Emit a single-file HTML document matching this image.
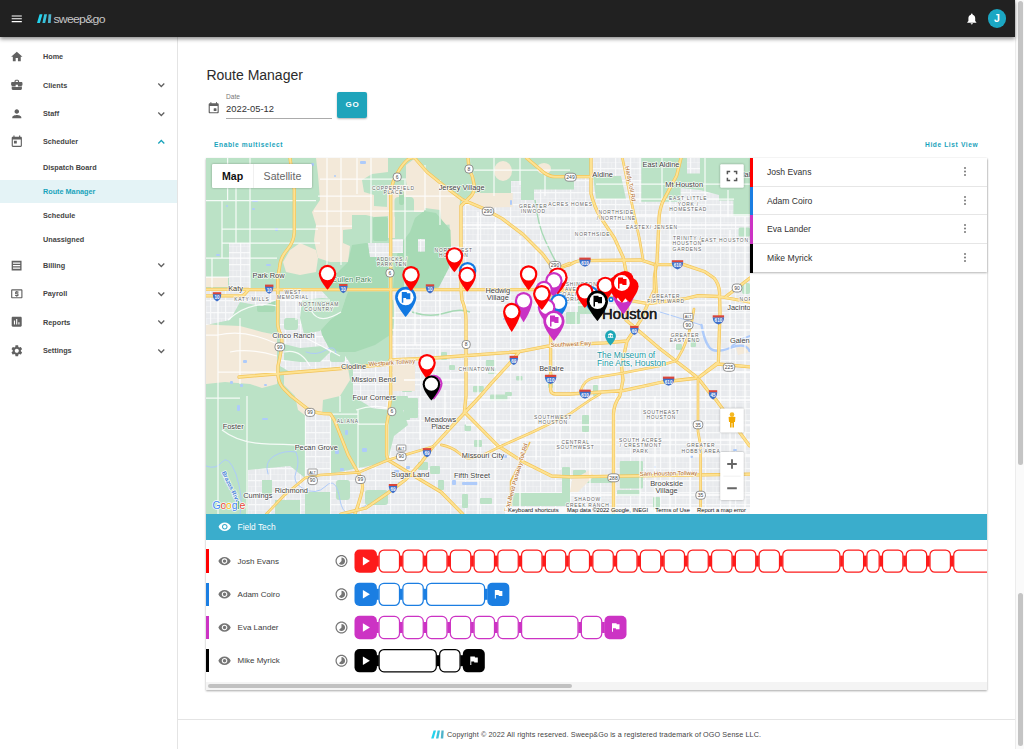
<!DOCTYPE html>
<html lang="en">
<head>
<meta charset="utf-8">
<title>Route Manager</title>
<style>
*{box-sizing:border-box;margin:0;padding:0}
html,body{width:1024px;height:749px;overflow:hidden;background:#fff;font-family:"Liberation Sans",sans-serif;color:#333}
body{position:relative}
.abs{position:absolute}
#hdr{position:absolute;left:0;top:0;width:1015px;height:37px;background:#212121;box-shadow:0 1.5px 4px rgba(0,0,0,.45);z-index:5}
#side{position:absolute;left:0;top:37px;width:178px;height:712px;background:#fff;border-right:1px solid #e4e4e4}
.mi{position:absolute;left:43px;font-size:7.25px;font-weight:700;color:#444;line-height:10px;white-space:nowrap}
.mi.act{color:#19a3bb}
#actbg{position:absolute;left:0;top:143px;width:177px;height:23px;background:#e4f3f6}
.ic{position:absolute}
#vscroll{position:absolute;left:1015px;top:0;width:9px;height:749px;background:#fafafa;border-left:1px solid #ececec}
.vthumb{position:absolute;left:1017.5px;width:5px;background:#c4c4c4;border-radius:3px}
#title{position:absolute;left:206.4px;top:66px;font-size:14px;color:#2b2b2b;line-height:18px;white-space:nowrap}
#datelbl{position:absolute;left:226px;top:92.7px;font-size:6.6px;color:#777;line-height:8px}
#dateval{position:absolute;left:226px;top:102.7px;font-size:9.4px;color:#333;line-height:12px}
#dateline{position:absolute;left:226px;top:118px;width:106px;height:1px;background:#ababab}
#go{position:absolute;left:337px;top:92px;width:30px;height:26px;background:#1ea4bb;border-radius:2px;color:#fff;font-size:8px;font-weight:700;letter-spacing:.9px;text-align:center;line-height:26.6px;padding-left:1px;box-shadow:0 1px 2px rgba(0,0,0,.3)}
.lnk{position:absolute;font-size:6.6px;font-weight:700;color:#19a3bb;letter-spacing:.62px;line-height:8px;white-space:nowrap}
#card{position:absolute;left:206px;top:158px;width:781px;height:532px;background:#fff;box-shadow:0 1px 2px rgba(0,0,0,.35)}
#map{position:absolute;left:0;top:0;width:544px;height:356px;overflow:hidden;background:#e9eaed}
#list{position:absolute;left:544px;top:0;width:237px;height:114px;background:#fff;box-shadow:0 1px 2px rgba(0,0,0,.3)}
.lrow{position:absolute;left:0;width:237px;height:28.5px;border-bottom:1px solid #e6e6e6}
.lrow b{position:absolute;left:0;top:0;width:3px;height:29px}
.lrow span{position:absolute;left:17px;top:9.4px;font-size:8.6px;color:#333;line-height:10px;white-space:nowrap}
.lrow i{position:absolute;left:214px;top:9px;width:2px;height:2px;border-radius:1px;background:#777;box-shadow:0 3.5px 0 #777,0 7px 0 #777}
#ftbar{position:absolute;left:0;top:356px;width:781px;height:26px;background:#3aadcc}
#ftbar span{position:absolute;left:31.6px;top:7.9px;font-size:8.4px;color:#fff;line-height:10px}
.trow{position:absolute;left:0;width:781px;height:33px}
.trow b{position:absolute;left:0;top:4.9px;width:2.5px;height:23.3px}
.trow span{position:absolute;left:31.6px;top:12.2px;font-size:8px;color:#3c3c3c;line-height:10px;white-space:nowrap}
#hs{position:absolute;left:0;top:524px;width:781px;height:8px;background:#f4f4f4}
#hst{position:absolute;left:2px;top:2px;width:364px;height:4px;background:#c1c1c1;border-radius:2px}
#foot{position:absolute;left:178px;top:719px;width:837px;height:30px;border-top:1px solid #e4e4e4;background:#fff}
#foot span{position:absolute;left:269px;top:10.4px;font-size:7.2px;color:#444;line-height:9px;white-space:nowrap;letter-spacing:.12px}
</style>
</head>
<body>
<div id="hdr">
<svg class="ic" style="left:9.9px;top:11.8px" width="13.5" height="13.5" viewBox="0 0 24 24" ><path d="M3 18h18v-2H3v2zm0-5h18v-2H3v2zm0-7v2h18V6H3z" fill="#fff"/></svg>
<svg class="ic" style="left:36px;top:12px" width="72" height="14" viewBox="36 12 72 14"><path d="M39.6 14.3H42.5L39.9 22.9H37Z" fill="#22d3ee"/><path d="M44.2 14.3H47L45.2 22.9H42.4Z" fill="#38c3dc"/><path d="M48.6 14.3H51.3L50.7 22.9H47.9Z" fill="#4fb3ca"/><text x="53.4" y="22.5" font-family="Liberation Sans, sans-serif" font-size="11.4" fill="#c6c6c6" letter-spacing="-.7" textLength="51.4" lengthAdjust="spacingAndGlyphs">sweep&amp;go</text></svg>
<svg class="ic" style="left:964.8px;top:12.2px" width="13.6" height="13.6" viewBox="0 0 24 24" ><path d="M12 22c1.1 0 2-.9 2-2h-4c0 1.1.89 2 2 2zm6-6v-5c0-3.07-1.64-5.64-4.5-6.32V4c0-.83-.67-1.5-1.5-1.5s-1.5.67-1.5 1.5v.68C7.63 5.36 6 7.92 6 11v5l-2 2v1h16v-1l-2-2z" fill="#fff"/></svg>
<div style="position:absolute;left:987.8px;top:9.4px;width:18.4px;height:18.4px;border-radius:50%;background:#1ba7c3;color:#fff;font-size:10.6px;font-weight:700;line-height:19.6px;text-align:center">J</div>
</div>
<div id="side">
  <div id="actbg"></div>
<svg class="ic" style="left:9.9px;top:12.8px" width="13.6" height="13.6" viewBox="0 0 24 24" ><path d="M10 20v-6h4v6h5v-8h3L12 3 2 12h3v8z" fill="#616161"/></svg>
<svg class="ic" style="left:9.9px;top:41.3px" width="13.6" height="13.6" viewBox="0 0 24 24" ><path d="M10 16v-1H3.01L3 19c0 1.11.89 2 2 2h14c1.11 0 2-.89 2-2v-4h-7v1h-4zm10-9h-4.01V5l-2-2h-4l-2 2v2H4c-1.1 0-2 .9-2 2v3c0 1.11.89 2 2 2h6v-2h4v2h6c1.1 0 2-.9 2-2V9c0-1.1-.9-2-2-2zm-6 0h-4V5h4v2z" fill="#616161"/></svg>
<svg class="ic" style="left:9.9px;top:69.8px" width="13.6" height="13.6" viewBox="0 0 24 24" ><path d="M12 12c2.21 0 4-1.79 4-4s-1.79-4-4-4-4 1.79-4 4 1.79 4 4 4zm0 2c-2.67 0-8 1.34-8 4v2h16v-2c0-2.66-5.33-4-8-4z" fill="#616161"/></svg>
<svg class="ic" style="left:9.9px;top:97.5px" width="13.6" height="13.6" viewBox="0 0 24 24" ><path d="M19 3h-1V1h-2v2H8V1H6v2H5c-1.11 0-1.99.9-1.99 2L3 19c0 1.1.89 2 2 2h14c1.1 0 2-.9 2-2V5c0-1.1-.9-2-2-2zm0 16H5V8h14v11zM7 10h5v5H7z" fill="#616161"/></svg>
<svg class="ic" style="left:10.1px;top:221.5px" width="13.2" height="13.2" viewBox="0 0 24 24" ><path d="M3 3H21V21H3ZM5.4 6.2V8.5H18.6V6.2ZM5.4 10.85V13.15H18.6V10.85ZM5.4 15.5V17.8H18.6V15.5Z" fill="#616161"/></svg>
<svg class="ic" style="left:9.9px;top:249.9px" width="13.6" height="13.6" viewBox="0 0 24 24" ><path d="M11 17h2v-1h1c.55 0 1-.45 1-1v-3c0-.55-.45-1-1-1h-3v-1h4V8h-2V7h-2v1h-1c-.55 0-1 .45-1 1v3c0 .55.45 1 1 1h3v1H9v2h2v1zm9-13H4c-1.11 0-1.99.89-1.99 2L2 18c0 1.11.89 2 2 2h16c1.11 0 2-.89 2-2V6c0-1.11-.89-2-2-2zm0 14H4V6h16v12z" fill="#616161"/></svg>
<svg class="ic" style="left:10px;top:278.3px" width="13.4" height="13.4" viewBox="0 0 24 24" ><path d="M19 3H5c-1.1 0-2 .9-2 2v14c0 1.1.9 2 2 2h14c1.1 0 2-.9 2-2V5c0-1.1-.9-2-2-2zM9 17H7v-7h2v7zm4 0h-2V7h2v10zm4 0h-2v-4h2v4z" fill="#616161"/></svg>
<svg class="ic" style="left:9.9px;top:306.7px" width="13.6" height="13.6" viewBox="0 0 24 24" ><path d="M19.14 12.94c.04-.3.06-.61.06-.94 0-.32-.02-.64-.07-.94l2.03-1.58c.18-.14.23-.41.12-.61l-1.92-3.32c-.12-.22-.37-.29-.59-.22l-2.39.96c-.5-.38-1.03-.7-1.62-.94l-.36-2.54c-.04-.24-.24-.41-.48-.41h-3.84c-.24 0-.43.17-.47.41l-.36 2.54c-.59.24-1.13.57-1.62.94l-2.39-.96c-.22-.08-.47 0-.59.22L2.74 8.87c-.12.21-.08.47.12.61l2.03 1.58c-.05.3-.09.63-.09.94s.02.64.07.94l-2.03 1.58c-.18.14-.23.41-.12.61l1.92 3.32c.12.22.37.29.59.22l2.39-.96c.5.38 1.03.7 1.62.94l.36 2.54c.05.24.24.41.48.41h3.84c.24 0 .44-.17.47-.41l.36-2.54c.59-.24 1.13-.56 1.62-.94l2.39.96c.22.08.47 0 .59-.22l1.92-3.32c.12-.22.07-.47-.12-.61l-2.01-1.58zM12 15.6c-1.98 0-3.6-1.62-3.6-3.6s1.62-3.6 3.6-3.6 3.6 1.62 3.6 3.6-1.62 3.6-3.6 3.6z" fill="#616161"/></svg>
<svg class="ic" style="left:157.4px;top:45.3px" width="8.6" height="6" viewBox="0 0 8.6 6"><path d="M1.3 1.5L4.3 4.5L7.3 1.5" fill="none" stroke="#606060" stroke-width="1.25"/></svg>
<svg class="ic" style="left:157.4px;top:73.7px" width="8.6" height="6" viewBox="0 0 8.6 6"><path d="M1.3 1.5L4.3 4.5L7.3 1.5" fill="none" stroke="#606060" stroke-width="1.25"/></svg>
<svg class="ic" style="left:157.4px;top:225.3px" width="8.6" height="6" viewBox="0 0 8.6 6"><path d="M1.3 1.5L4.3 4.5L7.3 1.5" fill="none" stroke="#606060" stroke-width="1.25"/></svg>
<svg class="ic" style="left:157.4px;top:253.5px" width="8.6" height="6" viewBox="0 0 8.6 6"><path d="M1.3 1.5L4.3 4.5L7.3 1.5" fill="none" stroke="#606060" stroke-width="1.25"/></svg>
<svg class="ic" style="left:157.4px;top:282.3px" width="8.6" height="6" viewBox="0 0 8.6 6"><path d="M1.3 1.5L4.3 4.5L7.3 1.5" fill="none" stroke="#606060" stroke-width="1.25"/></svg>
<svg class="ic" style="left:157.4px;top:310.7px" width="8.6" height="6" viewBox="0 0 8.6 6"><path d="M1.3 1.5L4.3 4.5L7.3 1.5" fill="none" stroke="#606060" stroke-width="1.25"/></svg>
<svg class="ic" style="left:157.4px;top:101.6px" width="8.6" height="6" viewBox="0 0 8.6 6"><path d="M1.3 4.5L4.3 1.5L7.3 4.5" fill="none" stroke="#19a3bb" stroke-width="1.25"/></svg>
  <div class="mi" style="top:14.8px">Home</div>
  <div class="mi" style="top:43.8px">Clients</div>
  <div class="mi" style="top:71.8px">Staff</div>
  <div class="mi" style="top:99.8px">Scheduler</div>
  <div class="mi" style="top:125.8px">Dispatch Board</div>
  <div class="mi act" style="top:149.8px">Route Manager</div>
  <div class="mi" style="top:173.8px">Schedule</div>
  <div class="mi" style="top:197.8px">Unassigned</div>
  <div class="mi" style="top:223.8px">Billing</div>
  <div class="mi" style="top:251.8px">Payroll</div>
  <div class="mi" style="top:280.8px">Reports</div>
  <div class="mi" style="top:308.8px">Settings</div>
</div>
<div id="title">Route Manager</div>
<div id="datelbl">Date</div>
<div id="dateval">2022-05-12</div>
<div id="dateline"></div>
<div id="go">GO</div>
<svg class="ic" style="left:206.8px;top:101.4px" width="13.4" height="13.4" viewBox="0 0 24 24" ><path d="M16 13h-3c-.55 0-1 .45-1 1v3c0 .55.45 1 1 1h3c.55 0 1-.45 1-1v-3c0-.55-.45-1-1-1zm0-10v1H8V3c0-.55-.45-1-1-1s-1 .45-1 1v1H5c-1.11 0-1.99.9-1.99 2L3 20c0 1.1.89 2 2 2h14c1.1 0 2-.9 2-2V6c0-1.1-.9-2-2-2h-1V3c0-.55-.45-1-1-1s-1 .45-1 1zm2 17H6c-.55 0-1-.45-1-1V9h14v10c0 .55-.45 1-1 1z" fill="#616161"/></svg>
<div class="lnk" style="left:214px;top:140.9px">Enable multiselect</div>
<div class="lnk" style="left:925px;top:140.9px">Hide List View</div>
<div id="card">
  <div id="map"><svg width="544" height="356" viewBox="206 158 544 356" style="position:absolute;left:0;top:0;display:block" font-family="Liberation Sans, sans-serif">
<defs>
<pattern id="grid" width="15" height="12" patternUnits="userSpaceOnUse"><path d="M0 .6H15M.6 0V12" stroke="#fff" stroke-width="1.2" opacity=".7" fill="none"/><path d="M0 6.5H15M8 0V12M4.2 0V6.5M11.6 6.5V12" stroke="#fff" stroke-width=".8" opacity=".32" fill="none"/></pattern>
</defs>
<rect x="206" y="158" width="544" height="356" fill="#e8eaed" />
<rect x="206" y="158" width="544" height="356" fill="url(#grid)" />
<polygon points="206,158 470,158 474,176 474,196 462,200 461,206 455,215 452,240 450,289 390,289 390,396 400,400 408,425 394,436 388,460 388,514 206,514" fill="#bbe2c6" />
<polygon points="470,158 590,158 590,175.5 574,177 574,189.6 534,189.6 534,200 521,200 521,181 511,181 511,193 474,193 474,176" fill="#bbe2c6" />
<polygon points="593,176 621,176 626,199 596,199" fill="#bbe2c6" />
<polygon points="641.3,158 687,158 687,173.5 700,173.5 700,158 750,158 750,216 733.4,216 733.4,200.5 719,200.5 719,195 700,190 680.6,188 680.6,201.8 641.3,201.8" fill="#bbe2c6" />
<rect x="742" y="283" width="8" height="11" fill="#bbe2c6" rx="2"/>
<rect x="738.6" y="227.6" width="11.4" height="9" fill="#bbe2c6" rx="1.5"/>
<rect x="619.8" y="461" width="23.2" height="27.4" fill="#bbe2c6" rx="1"/>
<rect x="512.4" y="493" width="57.6" height="13" fill="#bbe2c6" rx="1"/>
<rect x="562" y="467" width="8" height="28.5" fill="#bbe2c6" rx="1"/>
<rect x="582" y="415" width="7" height="17" fill="#bbe2c6" rx="1"/>
<rect x="548" y="374" width="5" height="14" fill="#bbe2c6" rx="1"/>
<rect x="593" y="385" width="5" height="11" fill="#bbe2c6" rx="1"/>
<rect x="578" y="296" width="22" height="18" fill="#bbe2c6" rx="1"/>
<rect x="566" y="312" width="14" height="12" fill="#bbe2c6" rx="1"/>
<rect x="474" y="440" width="8" height="7" fill="#bbe2c6" rx="1"/>
<rect x="430" y="466" width="10" height="8" fill="#bbe2c6" rx="1"/>
<rect x="418" y="462" width="10" height="8" fill="#bbe2c6" rx="1"/>
<rect x="438" y="480" width="6" height="10" fill="#bbe2c6" rx="1"/>
<rect x="462" y="494" width="6" height="14" fill="#bbe2c6" rx="1"/>
<rect x="480" y="498" width="12" height="6" fill="#bbe2c6" rx="1"/>
<rect x="573" y="470" width="13" height="8" fill="#bbe2c6" rx="1"/>
<rect x="585" y="478" width="27" height="5" fill="#bbe2c6" rx="1"/>
<rect x="617" y="490" width="23" height="6" fill="#bbe2c6" rx="1"/>
<rect x="653" y="497" width="7" height="13" fill="#bbe2c6" rx="1"/>
<rect x="690" y="338" width="6" height="9" fill="#bbe2c6" rx="1"/>
<rect x="676" y="344" width="6" height="6" fill="#bbe2c6" rx="1"/>
<rect x="488" y="368" width="8" height="6" fill="#bbe2c6" rx="1"/>
<rect x="505" y="392" width="7" height="4" fill="#bbe2c6" rx="1"/>
<rect x="392" y="396" width="16" height="14" fill="#bbe2c6" rx="1"/>
<rect x="485.9" y="360" width="8.6" height="6.5" fill="#bbe2c6" rx="1"/>
<rect x="473" y="385.9" width="10.8" height="6.4" fill="#bbe2c6" rx="1"/>
<rect x="490" y="394.4" width="17.4" height="6.1" fill="#bbe2c6" rx="1"/>
<rect x="516" y="376" width="6.5" height="4.5" fill="#bbe2c6" rx="1"/>
<rect x="464.5" y="424.5" width="6.5" height="6.5" fill="#bbe2c6" rx="1"/>
<rect x="402" y="379" width="10" height="13" fill="#bbe2c6" rx="1"/>
<rect x="404" y="398" width="14" height="20" fill="#bbe2c6" rx="1"/>
<rect x="395" y="415" width="15" height="5" fill="#bbe2c6" rx="1"/>
<rect x="441" y="352" width="6" height="8" fill="#bbe2c6" rx="1"/>
<rect x="449" y="365" width="6" height="5" fill="#bbe2c6" rx="1"/>
<path d="M391 300Q393 320 390 335" stroke="#bbe2c6" stroke-width="5" fill="none"/>
<path d="M412 312Q430 318 445 313T470 312" stroke="#a7dab5" stroke-width="1.6" fill="none"/>
<path d="M535 200Q538 225 545 240T556 262" stroke="#a7dab5" stroke-width="1.4" fill="none"/>
<polygon points="316,158 388,158 388,172 372,174 362,180 364,192 374,195 374,206 388,207 388,216 374,217 366,215 352,215 352,229 343,230 343,243 350,246 348,262 330,262 318,258 314,240 316,225 312,212 320,200 318,175" fill="#f3e9d9" />
<polygon points="300,243 316,250 318,258 316,272 300,275 286,272 283,262 290,250" fill="#f3e9d9" />
<polygon points="406,165 414,159 427,172 447,188 460,199 459,224 442,225 440,210 425,208 424,212 409,212 408,196 406,180" fill="#f3e9d9" />
<rect x="387" y="185" width="23" height="28" fill="#f3e9d9" />
<polygon points="449,211 460,205 460,246 450.5,246" fill="#f3e9d9" />
<rect x="388" y="212" width="7" height="26" fill="#f3e9d9" />
<rect x="394.5" y="197" width="19.5" height="22" fill="#bbe2c6" rx="4"/>
<ellipse cx="503" cy="171" rx="9" ry="10" fill="#f3e9d9"/>
<polygon points="474,193 512.7,193 512.7,207 484,207.8 466,200" fill="#f3e9d9" />
<ellipse cx="544" cy="168.5" rx="7" ry="5.5" fill="#f3e9d9"/>
<polygon points="206,324 217,325 240,326 262,332 277,335 277,384 262,388 250,384 225,382 206,384" fill="#f3e9d9" />
<polygon points="284,373 348,368 350,380 340,396 323,400 322,415 310,419 298,410 295,396 284,385" fill="#f3e9d9" />
<rect x="393" y="364" width="22" height="27" fill="#f3e9d9" />
<rect x="206" y="277" width="22" height="10" fill="#f3e9d9" />
<polygon points="572,480 590,470 594,476 578,492 570,492" fill="#f3e9d9" />
<polygon points="736,348 750,344 750,352 738,355" fill="#f3e9d9" />
<polygon points="348,292 390,292 390,335 375,345 355,352 339,352 323,345 320,331 330,320 341,312 345,300" fill="#a7dab5" />
<polygon points="424,211 436,213 450.5,230 451,246 449,268 441,286 436,288 393,288 395,262 400,245 410,232 415,218" fill="#a7dab5" />
<polygon points="352,245 366,243 388,250 388,288 330,288 335,275 348,262" fill="#a7dab5" />
<rect x="257" y="300" width="18" height="12" fill="#a7dab5" rx="2"/>
<rect x="300" y="293" width="12" height="19" fill="#a7dab5" rx="2"/>
<rect x="316" y="300" width="6" height="20" fill="#a7dab5" rx="2"/>
<rect x="286" y="318" width="6" height="12" fill="#a7dab5" rx="2"/>
<rect x="399" y="191" width="5" height="14" fill="#a7dab5" rx="2"/>
<rect x="373" y="217" width="15" height="24" fill="#a7dab5" rx="2"/>
<polygon points="229,243 250,243 250,289 229,289" fill="#e8eaed" />
<polygon points="229,243 250,243 250,289 229,289" fill="url(#grid)" />
<polygon points="206,289 277,289 277,300 262,306 240,302 230,320 206,325" fill="#e8eaed" />
<polygon points="206,289 277,289 277,300 262,306 240,302 230,320 206,325" fill="url(#grid)" />
<polygon points="280,289 320,289 330,300 318,318 322,335 330,350 345,356 352,366 290,372 280,366" fill="#e8eaed" />
<polygon points="280,289 320,289 330,300 318,318 322,335 330,350 345,356 352,366 290,372 280,366" fill="url(#grid)" />
<polygon points="353,366 390,364 390,410 372,408 353,396" fill="#e8eaed" />
<polygon points="353,366 390,364 390,410 372,408 353,396" fill="url(#grid)" />
<polygon points="305.5,414 330.4,414 330.4,492 305.5,492" fill="#e8eaed" />
<polygon points="305.5,414 330.4,414 330.4,492 305.5,492" fill="url(#grid)" />
<polygon points="248,470 290,466 305,478 305,514 248,514" fill="#e8eaed" />
<polygon points="248,470 290,466 305,478 305,514 248,514" fill="url(#grid)" />
<polygon points="330,474 388,462 388,514 330,514" fill="#e8eaed" />
<polygon points="330,474 388,462 388,514 330,514" fill="url(#grid)" />
<polygon points="368,243 390,243 390,257 370,257" fill="#e8eaed" />
<polygon points="368,243 390,243 390,257 370,257" fill="url(#grid)" />
<polygon points="391.5,239 403,239 403,253 391.5,253" fill="#e8eaed" />
<polygon points="391.5,239 403,239 403,253 391.5,253" fill="url(#grid)" />
<polygon points="418,239 425,239 425,251.6 418,251.6" fill="#e8eaed" />
<polygon points="418,239 425,239 425,251.6 418,251.6" fill="url(#grid)" />
<polygon points="451,246 461,246 461,289 438,289 449,268" fill="#e8eaed" />
<polygon points="451,246 461,246 461,289 438,289 449,268" fill="url(#grid)" />
<polygon points="594,158 622,158 622,175 594,175" fill="#e8eaed" />
<polygon points="594,158 622,158 622,175 594,175" fill="url(#grid)" />
<rect x="262" y="480" width="10" height="15" fill="#bbe2c6" />
<rect x="275" y="500" width="25" height="14" fill="#bbe2c6" />
<rect x="336" y="480" width="14" height="20" fill="#bbe2c6" rx="3"/>
<rect x="365" y="490" width="23" height="15" fill="#bbe2c6" rx="3"/>
<polygon points="302,300 322,298 345,300 341,312 330,320 320,331 304,334 300,318" fill="#bbe2c6" />
<rect x="284" y="318" width="14" height="12" fill="#bbe2c6" rx="3"/>
<polygon points="284,344 300,348 322,346 330,352 320,362 300,362 284,360" fill="#bbe2c6" />
<rect x="330" y="352" width="15" height="10" fill="#bbe2c6" rx="2"/>
<g fill="none" stroke="#aecbfa" stroke-linecap="round">
<path d="M206 466Q216 470 222 462T236 474Q244 500 240 514" stroke-width="1"/>
<path d="M268 474Q264 462 274 456T296 452Q300 462 296 472T302 488Q316 496 326 486T340 500T366 505" stroke-width="1"/>
<path d="M701.5 325Q704 340 709 347T730 348T749.5 351" stroke-width="2.4"/>
<path d="M730 348Q738 340 750 336" stroke-width="2"/>
<path d="M660 312Q680 318 701 325" stroke-width="1"/>
<path d="M306 352Q316 356 326 350T336 354" stroke-width="1"/>
</g>
<rect x="252" y="200" width="6" height="2" rx="1" fill="#aecbfa"/>
<rect x="226" y="205" width="2" height="2" rx="1" fill="#aecbfa"/>
<rect x="311" y="163" width="3" height="3" rx="1" fill="#aecbfa"/>
<rect x="360" y="161" width="6" height="3" rx="1" fill="#aecbfa"/>
<rect x="216" y="254" width="4" height="2" rx="1" fill="#aecbfa"/>
<rect x="275" y="228" width="3" height="3" rx="1" fill="#aecbfa"/>
<rect x="252" y="208" width="3" height="2" rx="1" fill="#aecbfa"/>
<rect x="334" y="175" width="2" height="2" rx="1" fill="#aecbfa"/>
<rect x="266" y="264" width="5" height="2" rx="1" fill="#aecbfa"/>
<rect x="243" y="360" width="4" height="3" rx="1" fill="#aecbfa"/>
<rect x="230" y="381" width="3" height="3" rx="1" fill="#aecbfa"/>
<rect x="240" y="384" width="3" height="3" rx="1" fill="#aecbfa"/>
<rect x="264" y="384" width="3" height="2" rx="1" fill="#aecbfa"/>
<rect x="237" y="405" width="3" height="6" rx="1" fill="#aecbfa"/>
<rect x="262" y="418" width="6" height="2" rx="1" fill="#aecbfa"/>
<rect x="335" y="450" width="4" height="4" rx="1" fill="#aecbfa"/>
<rect x="340" y="468" width="4" height="3" rx="1" fill="#aecbfa"/>
<rect x="362" y="448" width="5" height="4" rx="1" fill="#aecbfa"/>
<rect x="345" y="430" width="3" height="5" rx="1" fill="#aecbfa"/>
<rect x="388" y="458" width="4" height="4" rx="1" fill="#aecbfa"/>
<rect x="394" y="470" width="5" height="4" rx="1" fill="#aecbfa"/>
<rect x="406" y="466" width="4" height="3" rx="1" fill="#aecbfa"/>
<rect x="398" y="482" width="3" height="3" rx="1" fill="#aecbfa"/>
<rect x="452" y="480" width="4" height="5" rx="1" fill="#aecbfa"/>
<rect x="462" y="482" width="16" height="3" rx="1" fill="#aecbfa"/>
<rect x="504" y="455" width="3" height="3" rx="1" fill="#aecbfa"/>
<rect x="588" y="400" width="2" height="2" rx="1" fill="#aecbfa"/>
<rect x="690" y="455" width="3" height="3" rx="1" fill="#aecbfa"/>
<rect x="654" y="466" width="2" height="2" rx="1" fill="#aecbfa"/>
<rect x="733" y="449" width="4" height="2" rx="1" fill="#aecbfa"/>
<rect x="510" y="200" width="2" height="5" rx="1" fill="#aecbfa"/>
<rect x="503" y="318" width="2" height="2" rx="1" fill="#aecbfa"/>
<g fill="none" stroke="#fff" stroke-width="1.25" opacity=".85">
<path d="M206 200.7H316M222 229H318M222 243H320M206 258H277M222 200V258M236 188V243M250 158V289M227.6 158V200M327 158V272M341 158V265M357 158V194M371 158V243M320 179H388M318 196H372M314 211H388M316 226H352M212 258V289M206 277H229M388 179H406M388 211H424M405 180V288M425 165V210M440 180V225M406 196H460M474 170H570M494 158V196M520 158V185M545 172V196M596 184H750M640 158V203M662 158V203M705 158V200M728 190V217M596 199H734M218 296V396M206 335H218M218 335Q240 330 262 338T277 345M228 320Q250 300 277 306M230 352Q250 348 277 356M218 372H277M240 318V384M282 300H330M296 289V320M312 289V312Q320 325 341 312M300 335Q320 345 340 356M284 352Q300 348 310 366M206 398H240M218 396V514M247 396V514M222 430Q240 444 270 444T306 447M305.5 414V492M330.4 414V492M356 410Q372 404 388 408M358 424H388M358 410V470M340 396V412M388 396V460M395 300V360M330 414H358"/>
</g>
<g fill="none" stroke="#fff" stroke-width="1.3" opacity=".95">
<path d="M478 212V514M495 222V514M520 236V514M536 250V460M576 200V400M600 250V400M670 200V514M690 300V514M730 230V514M745 217V514M461 305H750M390 330H750M466 372H750M466 400H750M466 425H750M500 440H750M560 455H750M570 495H750M461 225H750M461 245H750M540 215H750M390 345H461M415 289V345M440 289V358M390 318H461M404 380H466M420 396V440M445 390V430M640 400V514M655 396V514M590 400V514M560 400V470"/>
</g>
<g fill="none" stroke="#f3c456" stroke-width="3.3" stroke-linejoin="round" stroke-linecap="round">
<path d="M627 300L600 296L575 291L551 289.6H248.7L243 295.8H206M248.7 289.4H206M290 158L294.3 190V232Q294 242 287 250T279.5 268L277.8 277V318Q277 328 280.6 334T278 366V376Q279 384 284 389T291 396L309 410Q318 414 330.4 413.8Q335 420 337.5 428L348 454.7L358.9 474Q363 482 362.4 488.4T355 514M462.6 514L441 492L420 479.5L388 460L386.6 455V425L388.5 415L390.7 396V195Q391 182 400 168.7T414.7 158M414.7 158L427 172L446.7 188L462.7 199.8L484 208.7L501.8 218.4L523 234.4L542.6 254L553 268L558 277L562 289M468 158L469 169Q473 176 474 184T471 196L461 206V289L462 300Q466 310 466 320V396L464.4 412M526.6 158L544.4 173Q550 176.7 555 176.7H591M591 158V193.5Q594 206 600 216.7L614.4 238L623.3 257.5L627 277V318M681 158L676.6 175.8L662.4 202.4Q659 212 659 220L657 261L654.4 277V290L646.4 307L641 319.7L634 330.3L627 341M551 289Q552 268 570 264.6Q576 261 580.7 260.7L641 260L655 264.6H683.8L705 271.8L714 278Q719 284 719.5 292L720 312.5L718.4 362L698 378L662.4 382L623 390.7L570 394H556Q551 394 550.6 390V289M627 300L648 303.7L683.8 299L698 295.7L719 296.5L749.5 302M726 296.5L750 278M626 320L659 348L698 378L712 396L715.8 399.5L749.5 445.8M698 378L717.5 364L750 366.8M390 359.8L434 358L519.5 351.6L551.5 345.4L570 344.5L605.5 342.8L627 341M519.5 351.6L509 364L491 383.6L480.4 396L465.3 412L432.4 447.5L421.8 461.8L405.8 479.5L388 492.9L366 508L341 514M627 341L621.5 366L623 380L619.8 396Q614 404 613.5 413.8V514M464.4 412L498 445.8L523 461.8L551.5 476L570 476.9L750 474.2M239 377L341 368.5L390 364"/>
</g>
<g fill="none" stroke="#fde293" stroke-width="2" stroke-linejoin="round" stroke-linecap="round">
<path d="M627 300L600 296L575 291L551 289.6H248.7L243 295.8H206M248.7 289.4H206M290 158L294.3 190V232Q294 242 287 250T279.5 268L277.8 277V318Q277 328 280.6 334T278 366V376Q279 384 284 389T291 396L309 410Q318 414 330.4 413.8Q335 420 337.5 428L348 454.7L358.9 474Q363 482 362.4 488.4T355 514M462.6 514L441 492L420 479.5L388 460L386.6 455V425L388.5 415L390.7 396V195Q391 182 400 168.7T414.7 158M414.7 158L427 172L446.7 188L462.7 199.8L484 208.7L501.8 218.4L523 234.4L542.6 254L553 268L558 277L562 289M468 158L469 169Q473 176 474 184T471 196L461 206V289L462 300Q466 310 466 320V396L464.4 412M526.6 158L544.4 173Q550 176.7 555 176.7H591M591 158V193.5Q594 206 600 216.7L614.4 238L623.3 257.5L627 277V318M681 158L676.6 175.8L662.4 202.4Q659 212 659 220L657 261L654.4 277V290L646.4 307L641 319.7L634 330.3L627 341M551 289Q552 268 570 264.6Q576 261 580.7 260.7L641 260L655 264.6H683.8L705 271.8L714 278Q719 284 719.5 292L720 312.5L718.4 362L698 378L662.4 382L623 390.7L570 394H556Q551 394 550.6 390V289M627 300L648 303.7L683.8 299L698 295.7L719 296.5L749.5 302M726 296.5L750 278M626 320L659 348L698 378L712 396L715.8 399.5L749.5 445.8M698 378L717.5 364L750 366.8M390 359.8L434 358L519.5 351.6L551.5 345.4L570 344.5L605.5 342.8L627 341M519.5 351.6L509 364L491 383.6L480.4 396L465.3 412L432.4 447.5L421.8 461.8L405.8 479.5L388 492.9L366 508L341 514M627 341L621.5 366L623 380L619.8 396Q614 404 613.5 413.8V514M464.4 412L498 445.8L523 461.8L551.5 476L570 476.9L750 474.2M239 377L341 368.5L390 364"/>
</g>
<g fill="none" stroke="#f3c456" stroke-width="2.6" stroke-linejoin="round" stroke-linecap="round">
<path d="M622.4 158L630.4 197L639.3 238L643 259.3M266.4 514L284 495.5L305.5 477.8L320 475L358.9 472.4L388 460L432.4 446.7M441.3 444.9Q452 447 459 452.9T470 458T484 454.7L501.8 445.8L533.7 431.5L570 413.8L590 400L600 394M698 378V431.5L700.6 445.8V514M580.7 390.7Q584 380 593 378L623 373L659 366L676.6 360.5Q690 340 694 309M570 263L562 266M655 264L657 300"/>
</g>
<g fill="none" stroke="#fde293" stroke-width="1.4" stroke-linejoin="round" stroke-linecap="round">
<path d="M622.4 158L630.4 197L639.3 238L643 259.3M266.4 514L284 495.5L305.5 477.8L320 475L358.9 472.4L388 460L432.4 446.7M441.3 444.9Q452 447 459 452.9T470 458T484 454.7L501.8 445.8L533.7 431.5L570 413.8L590 400L600 394M698 378V431.5L700.6 445.8V514M580.7 390.7Q584 380 593 378L623 373L659 366L676.6 360.5Q690 340 694 309M570 263L562 266M655 264L657 300"/>
</g>
<path d="M530 442L519.5 463.5L510.6 481.3V506" fill="none" stroke="#f3c456" stroke-width="1.6"/>
<g transform="translate(217 296.6)"><path d="M-4.2-4.4H4.2V-2H-4.2Z" fill="#d9453a"/><path d="M-4.2-2.3H4.2Q4.2 3 0 4.8Q-4.2 3 -4.2-2.3Z" fill="#3f6fc9"/><text x="0" y="2.6" font-size="4.6" font-weight="700" fill="#fff" text-anchor="middle">10</text></g>
<g transform="translate(269.2 289)"><path d="M-4.2-4.4H4.2V-2H-4.2Z" fill="#d9453a"/><path d="M-4.2-2.3H4.2Q4.2 3 0 4.8Q-4.2 3 -4.2-2.3Z" fill="#3f6fc9"/><text x="0" y="2.6" font-size="4.6" font-weight="700" fill="#fff" text-anchor="middle">10</text></g>
<g transform="translate(343.3 288.4)"><path d="M-4.2-4.4H4.2V-2H-4.2Z" fill="#d9453a"/><path d="M-4.2-2.3H4.2Q4.2 3 0 4.8Q-4.2 3 -4.2-2.3Z" fill="#3f6fc9"/><text x="0" y="2.6" font-size="4.6" font-weight="700" fill="#fff" text-anchor="middle">10</text></g>
<g transform="translate(430 288.7)"><path d="M-4.2-4.4H4.2V-2H-4.2Z" fill="#d9453a"/><path d="M-4.2-2.3H4.2Q4.2 3 0 4.8Q-4.2 3 -4.2-2.3Z" fill="#3f6fc9"/><text x="0" y="2.6" font-size="4.6" font-weight="700" fill="#fff" text-anchor="middle">10</text></g>
<g transform="translate(585 262)"><path d="M-5.7-4.4H5.7V-2H-5.7Z" fill="#d9453a"/><path d="M-5.7-2.3H5.7Q5.7 3 0 4.8Q-5.7 3 -5.7-2.3Z" fill="#3f6fc9"/><text x="0" y="2.6" font-size="4.6" font-weight="700" fill="#fff" text-anchor="middle">610</text></g>
<g transform="translate(677.5 264.6)"><path d="M-5.7-4.4H5.7V-2H-5.7Z" fill="#d9453a"/><path d="M-5.7-2.3H5.7Q5.7 3 0 4.8Q-5.7 3 -5.7-2.3Z" fill="#3f6fc9"/><text x="0" y="2.6" font-size="4.6" font-weight="700" fill="#fff" text-anchor="middle">610</text></g>
<g transform="translate(718.4 319.7)"><path d="M-5.7-4.4H5.7V-2H-5.7Z" fill="#d9453a"/><path d="M-5.7-2.3H5.7Q5.7 3 0 4.8Q-5.7 3 -5.7-2.3Z" fill="#3f6fc9"/><text x="0" y="2.6" font-size="4.6" font-weight="700" fill="#fff" text-anchor="middle">610</text></g>
<g transform="translate(668.6 381)"><path d="M-5.7-4.4H5.7V-2H-5.7Z" fill="#d9453a"/><path d="M-5.7-2.3H5.7Q5.7 3 0 4.8Q-5.7 3 -5.7-2.3Z" fill="#3f6fc9"/><text x="0" y="2.6" font-size="4.6" font-weight="700" fill="#fff" text-anchor="middle">610</text></g>
<g transform="translate(585 394)"><path d="M-5.7-4.4H5.7V-2H-5.7Z" fill="#d9453a"/><path d="M-5.7-2.3H5.7Q5.7 3 0 4.8Q-5.7 3 -5.7-2.3Z" fill="#3f6fc9"/><text x="0" y="2.6" font-size="4.6" font-weight="700" fill="#fff" text-anchor="middle">610</text></g>
<g transform="translate(550.6 379.2)"><path d="M-5.7-4.4H5.7V-2H-5.7Z" fill="#d9453a"/><path d="M-5.7-2.3H5.7Q5.7 3 0 4.8Q-5.7 3 -5.7-2.3Z" fill="#3f6fc9"/><text x="0" y="2.6" font-size="4.6" font-weight="700" fill="#fff" text-anchor="middle">610</text></g>
<g transform="translate(513.8 360.2)"><path d="M-4.2-4.4H4.2V-2H-4.2Z" fill="#d9453a"/><path d="M-4.2-2.3H4.2Q4.2 3 0 4.8Q-4.2 3 -4.2-2.3Z" fill="#3f6fc9"/><text x="0" y="2.6" font-size="4.6" font-weight="700" fill="#fff" text-anchor="middle">69</text></g>
<g transform="translate(634.3 330.3)"><path d="M-4.2-4.4H4.2V-2H-4.2Z" fill="#d9453a"/><path d="M-4.2-2.3H4.2Q4.2 3 0 4.8Q-4.2 3 -4.2-2.3Z" fill="#3f6fc9"/><text x="0" y="2.6" font-size="4.6" font-weight="700" fill="#fff" text-anchor="middle">69</text></g>
<g transform="translate(427 452.5)"><path d="M-4.2-4.4H4.2V-2H-4.2Z" fill="#d9453a"/><path d="M-4.2-2.3H4.2Q4.2 3 0 4.8Q-4.2 3 -4.2-2.3Z" fill="#3f6fc9"/><text x="0" y="2.6" font-size="4.6" font-weight="700" fill="#fff" text-anchor="middle">69</text></g>
<g transform="translate(393 488.4)"><path d="M-4.2-4.4H4.2V-2H-4.2Z" fill="#d9453a"/><path d="M-4.2-2.3H4.2Q4.2 3 0 4.8Q-4.2 3 -4.2-2.3Z" fill="#3f6fc9"/><text x="0" y="2.6" font-size="4.6" font-weight="700" fill="#fff" text-anchor="middle">69</text></g>
<g transform="translate(713 394.6)"><path d="M-4.2-4.4H4.2V-2H-4.2Z" fill="#d9453a"/><path d="M-4.2-2.3H4.2Q4.2 3 0 4.8Q-4.2 3 -4.2-2.3Z" fill="#3f6fc9"/><text x="0" y="2.6" font-size="4.6" font-weight="700" fill="#fff" text-anchor="middle">45</text></g>
<g transform="translate(397.2 177)"><rect x="-4" y="-4" width="8" height="8" rx="3.2" fill="#fff" stroke="#777" stroke-width=".8"/><text x="0" y="1.8" font-size="5" fill="#444" text-anchor="middle">6</text></g>
<g transform="translate(390 273)"><rect x="-4" y="-4" width="8" height="8" rx="3.2" fill="#fff" stroke="#777" stroke-width=".8"/><text x="0" y="1.8" font-size="5" fill="#444" text-anchor="middle">6</text></g>
<g transform="translate(469 169)"><rect x="-4" y="-4" width="8" height="8" rx="3.2" fill="#fff" stroke="#777" stroke-width=".8"/><text x="0" y="1.8" font-size="5" fill="#444" text-anchor="middle">8</text></g>
<g transform="translate(488 211.3)"><rect x="-5.7" y="-4" width="11.4" height="8" rx="3.2" fill="#fff" stroke="#777" stroke-width=".8"/><text x="0" y="1.8" font-size="5" fill="#444" text-anchor="middle">290</text></g>
<g transform="translate(570.5 177.2)"><rect x="-5.7" y="-4" width="11.4" height="8" rx="3.2" fill="#fff" stroke="#777" stroke-width=".8"/><text x="0" y="1.8" font-size="5" fill="#444" text-anchor="middle">249</text></g>
<g transform="translate(555 265.5)"><rect x="-5.7" y="-4" width="11.4" height="8" rx="3.2" fill="#fff" stroke="#777" stroke-width=".8"/><text x="0" y="1.8" font-size="5" fill="#444" text-anchor="middle">290</text></g>
<g transform="translate(279.8 346.9)"><rect x="-4.8" y="-4" width="9.6" height="8" rx="3.2" fill="#fff" stroke="#777" stroke-width=".8"/><text x="0" y="1.8" font-size="5" fill="#444" text-anchor="middle">99</text></g>
<g transform="translate(310 412.4)"><rect x="-4.8" y="-4" width="9.6" height="8" rx="3.2" fill="#fff" stroke="#777" stroke-width=".8"/><text x="0" y="1.8" font-size="5" fill="#444" text-anchor="middle">99</text></g>
<g transform="translate(360.4 479.5)"><rect x="-4.8" y="-4" width="9.6" height="8" rx="3.2" fill="#fff" stroke="#777" stroke-width=".8"/><text x="0" y="1.8" font-size="5" fill="#444" text-anchor="middle">99</text></g>
<g transform="translate(466.2 344.5)"><rect x="-4" y="-4" width="8" height="8" rx="3.2" fill="#fff" stroke="#777" stroke-width=".8"/><text x="0" y="1.8" font-size="5" fill="#444" text-anchor="middle">8</text></g>
<g transform="translate(391.8 411.6)"><rect x="-4" y="-4" width="8" height="8" rx="3.2" fill="#fff" stroke="#777" stroke-width=".8"/><text x="0" y="1.8" font-size="5" fill="#444" text-anchor="middle">6</text></g>
<g transform="translate(613.5 477.8)"><rect x="-5.7" y="-4" width="11.4" height="8" rx="3.2" fill="#fff" stroke="#777" stroke-width=".8"/><text x="0" y="1.8" font-size="5" fill="#444" text-anchor="middle">288</text></g>
<g transform="translate(698 424.8)"><rect x="-4.8" y="-4" width="9.6" height="8" rx="3.2" fill="#fff" stroke="#777" stroke-width=".8"/><text x="0" y="1.8" font-size="5" fill="#444" text-anchor="middle">35</text></g>
<g transform="translate(700.6 495.2)"><rect x="-4.8" y="-4" width="9.6" height="8" rx="3.2" fill="#fff" stroke="#777" stroke-width=".8"/><text x="0" y="1.8" font-size="5" fill="#444" text-anchor="middle">35</text></g>
<g transform="translate(729 367.3)"><rect x="-5.7" y="-4" width="11.4" height="8" rx="3.2" fill="#fff" stroke="#777" stroke-width=".8"/><text x="0" y="1.8" font-size="5" fill="#444" text-anchor="middle">225</text></g>
<g transform="translate(737 288)"><rect x="-4.8" y="-4" width="9.6" height="8" rx="3.2" fill="#fff" stroke="#777" stroke-width=".8"/><text x="0" y="1.8" font-size="5" fill="#444" text-anchor="middle">90</text></g>
<g transform="translate(688.2 325)"><rect x="-4.8" y="-4" width="9.6" height="8" rx="3.2" fill="#fff" stroke="#777" stroke-width=".8"/><text x="0" y="1.8" font-size="5" fill="#444" text-anchor="middle">90</text></g>
<g transform="translate(312.6 480.6)"><rect x="-4.8" y="-4" width="9.6" height="8" rx="3.2" fill="#fff" stroke="#777" stroke-width=".8"/><text x="0" y="1.8" font-size="5" fill="#444" text-anchor="middle">90</text></g>
<g transform="translate(401.3 456.6)"><rect x="-4.8" y="-4" width="9.6" height="8" rx="3.2" fill="#fff" stroke="#777" stroke-width=".8"/><text x="0" y="1.8" font-size="5" fill="#444" text-anchor="middle">90</text></g>
<g transform="translate(688.2 316.4)"><rect x="-4.6" y="-3" width="9.2" height="6" rx=".8" fill="#fff" stroke="#777" stroke-width=".7"/><text x="0" y="1.5" font-size="3.8" fill="#444" text-anchor="middle">ALT</text></g>
<g transform="translate(312.6 472)"><rect x="-4.6" y="-3" width="9.2" height="6" rx=".8" fill="#fff" stroke="#777" stroke-width=".7"/><text x="0" y="1.5" font-size="3.8" fill="#444" text-anchor="middle">ALT</text></g>
<g transform="translate(401.3 448)"><rect x="-4.6" y="-3" width="9.2" height="6" rx=".8" fill="#fff" stroke="#777" stroke-width=".7"/><text x="0" y="1.5" font-size="3.8" fill="#444" text-anchor="middle">ALT</text></g>
<text x="268.5" y="278" font-size="7.4" fill="#444" text-anchor="middle" stroke="#fff" stroke-width="1.6" stroke-opacity=".8" paint-order="stroke" stroke-linejoin="round" >Park Row</text>
<text x="235.6" y="291.3" font-size="7.4" fill="#444" text-anchor="middle" stroke="#fff" stroke-width="1.6" stroke-opacity=".8" paint-order="stroke" stroke-linejoin="round" >Katy</text>
<text x="461.6" y="189.8" font-size="7.4" fill="#444" text-anchor="middle" stroke="#fff" stroke-width="1.6" stroke-opacity=".8" paint-order="stroke" stroke-linejoin="round" >Jersey Village</text>
<text x="293.4" y="338.3" font-size="7.4" fill="#444" text-anchor="middle" stroke="#fff" stroke-width="1.6" stroke-opacity=".8" paint-order="stroke" stroke-linejoin="round" >Cinco Ranch</text>
<text x="353.5" y="369" font-size="7.4" fill="#444" text-anchor="middle" stroke="#fff" stroke-width="1.6" stroke-opacity=".8" paint-order="stroke" stroke-linejoin="round" >Clodine</text>
<text x="373.6" y="382.4" font-size="7.4" fill="#444" text-anchor="middle" stroke="#fff" stroke-width="1.6" stroke-opacity=".8" paint-order="stroke" stroke-linejoin="round" >Mission Bend</text>
<text x="374.3" y="399.6" font-size="7.4" fill="#444" text-anchor="middle" stroke="#fff" stroke-width="1.6" stroke-opacity=".8" paint-order="stroke" stroke-linejoin="round" >Four Corners</text>
<text x="440.4" y="421.5" font-size="7.4" fill="#444" text-anchor="middle" stroke="#fff" stroke-width="1.6" stroke-opacity=".8" paint-order="stroke" stroke-linejoin="round" >Meadows</text>
<text x="440.4" y="428.6" font-size="7.4" fill="#444" text-anchor="middle" stroke="#fff" stroke-width="1.6" stroke-opacity=".8" paint-order="stroke" stroke-linejoin="round" >Place</text>
<text x="233.2" y="429.4" font-size="7.4" fill="#444" text-anchor="middle" stroke="#fff" stroke-width="1.6" stroke-opacity=".8" paint-order="stroke" stroke-linejoin="round" >Foster</text>
<text x="316.2" y="450.2" font-size="7.4" fill="#444" text-anchor="middle" stroke="#fff" stroke-width="1.6" stroke-opacity=".8" paint-order="stroke" stroke-linejoin="round" >Pecan Grove</text>
<text x="257.8" y="498" font-size="7.4" fill="#444" text-anchor="middle" stroke="#fff" stroke-width="1.6" stroke-opacity=".8" paint-order="stroke" stroke-linejoin="round" >Cumings</text>
<text x="291.3" y="493.2" font-size="7.4" fill="#444" text-anchor="middle" stroke="#fff" stroke-width="1.6" stroke-opacity=".8" paint-order="stroke" stroke-linejoin="round" >Richmond</text>
<text x="410.2" y="477.2" font-size="7.4" fill="#444" text-anchor="middle" stroke="#fff" stroke-width="1.6" stroke-opacity=".8" paint-order="stroke" stroke-linejoin="round" >Sugar Land</text>
<text x="472" y="477.7" font-size="7.4" fill="#444" text-anchor="middle" stroke="#fff" stroke-width="1.6" stroke-opacity=".8" paint-order="stroke" stroke-linejoin="round" >Fifth Street</text>
<text x="483" y="457.6" font-size="7.4" fill="#444" text-anchor="middle" stroke="#fff" stroke-width="1.6" stroke-opacity=".8" paint-order="stroke" stroke-linejoin="round" >Missouri City</text>
<text x="497.8" y="292.9" font-size="7.4" fill="#444" text-anchor="middle" stroke="#fff" stroke-width="1.6" stroke-opacity=".8" paint-order="stroke" stroke-linejoin="round" >Hedwig</text>
<text x="497.8" y="299.8" font-size="7.4" fill="#444" text-anchor="middle" stroke="#fff" stroke-width="1.6" stroke-opacity=".8" paint-order="stroke" stroke-linejoin="round" >Village</text>
<text x="551.5" y="371.1" font-size="7.4" fill="#444" text-anchor="middle" stroke="#fff" stroke-width="1.6" stroke-opacity=".8" paint-order="stroke" stroke-linejoin="round" >Bellaire</text>
<text x="602.6" y="176.6" font-size="7.4" fill="#444" text-anchor="middle" stroke="#fff" stroke-width="1.6" stroke-opacity=".8" paint-order="stroke" stroke-linejoin="round" >Aldine</text>
<text x="661" y="166.8" font-size="7.4" fill="#444" text-anchor="middle" stroke="#fff" stroke-width="1.6" stroke-opacity=".8" paint-order="stroke" stroke-linejoin="round" >East Aldine</text>
<text x="684.2" y="187.3" font-size="7.4" fill="#444" text-anchor="middle" stroke="#fff" stroke-width="1.6" stroke-opacity=".8" paint-order="stroke" stroke-linejoin="round" >Mt Houston</text>
<text x="666.6" y="485.5" font-size="7.4" fill="#444" text-anchor="middle" stroke="#fff" stroke-width="1.6" stroke-opacity=".8" paint-order="stroke" stroke-linejoin="round" >Brookside</text>
<text x="666.6" y="492.6" font-size="7.4" fill="#444" text-anchor="middle" stroke="#fff" stroke-width="1.6" stroke-opacity=".8" paint-order="stroke" stroke-linejoin="round" >Village</text>
<text x="727.3" y="309.5" font-size="7.4" fill="#444" text-anchor="start" stroke="#fff" stroke-width="1.6" stroke-opacity=".8" paint-order="stroke" stroke-linejoin="round" >Jacinto City</text>
<text x="721.2" y="177.4" font-size="7.4" fill="#444" text-anchor="start" stroke="#fff" stroke-width="1.6" stroke-opacity=".8" paint-order="stroke" stroke-linejoin="round" >Dyersdale</text>
<text x="739.6" y="301.4" font-size="4.9" fill="#666" letter-spacing=".75" stroke="#fff" stroke-width="1.6" stroke-opacity=".8" paint-order="stroke" stroke-linejoin="round">NORTHSHORE</text>
<text x="730" y="343.1" font-size="7.4" fill="#444" text-anchor="start" stroke="#fff" stroke-width="1.6" stroke-opacity=".8" paint-order="stroke" stroke-linejoin="round" >Galena Park</text>
<text x="629.6" y="318.8" font-size="14.8" fill="#1f1f1f" text-anchor="middle" stroke="#fff" stroke-width="1.6" stroke-opacity=".8" paint-order="stroke" stroke-linejoin="round" >Houston</text>
<text x="629.6" y="318.8" font-size="14.8" fill="#1f1f1f" stroke="#1f1f1f" stroke-width=".45" text-anchor="middle">Houston</text>
<text x="351.4" y="281.5" font-size="7.6" fill="#4c8b5e" text-anchor="middle" stroke="#fff" stroke-width="1.6" stroke-opacity=".8" paint-order="stroke" stroke-linejoin="round" >Cullen Park</text>
<text x="597" y="358" font-size="8.4" fill="#1a9aa6" text-anchor="start" stroke="#fff" stroke-width="1.6" stroke-opacity=".8" paint-order="stroke" stroke-linejoin="round" >The Museum of</text>
<text x="597" y="366.4" font-size="8.4" fill="#1a9aa6" text-anchor="start" stroke="#fff" stroke-width="1.6" stroke-opacity=".8" paint-order="stroke" stroke-linejoin="round" >Fine Arts, Houston</text>
<text x="251.8" y="301.4" font-size="4.9" fill="#666" text-anchor="middle" letter-spacing=".75" stroke="#fff" stroke-width="1.6" stroke-opacity=".8" paint-order="stroke" stroke-linejoin="round">KATY MILLS</text>
<text x="293" y="293.8" font-size="4.9" fill="#666" text-anchor="middle" letter-spacing=".75" stroke="#fff" stroke-width="1.6" stroke-opacity=".8" paint-order="stroke" stroke-linejoin="round">WEST</text>
<text x="293" y="298.8" font-size="4.9" fill="#666" text-anchor="middle" letter-spacing=".75" stroke="#fff" stroke-width="1.6" stroke-opacity=".8" paint-order="stroke" stroke-linejoin="round">MEMORIAL</text>
<text x="319" y="305.8" font-size="4.9" fill="#666" text-anchor="middle" letter-spacing=".75" stroke="#fff" stroke-width="1.6" stroke-opacity=".8" paint-order="stroke" stroke-linejoin="round">NOTTINGHAM</text>
<text x="319" y="311.2" font-size="4.9" fill="#666" text-anchor="middle" letter-spacing=".75" stroke="#fff" stroke-width="1.6" stroke-opacity=".8" paint-order="stroke" stroke-linejoin="round">COUNTRY</text>
<text x="393.3" y="189.5" font-size="4.9" fill="#666" text-anchor="middle" letter-spacing=".75" stroke="#fff" stroke-width="1.6" stroke-opacity=".8" paint-order="stroke" stroke-linejoin="round">COPPERFIELD</text>
<text x="393.3" y="194.3" font-size="4.9" fill="#666" text-anchor="middle" letter-spacing=".75" stroke="#fff" stroke-width="1.6" stroke-opacity=".8" paint-order="stroke" stroke-linejoin="round">PLACE</text>
<text x="392" y="260.8" font-size="4.9" fill="#666" text-anchor="middle" letter-spacing=".75" stroke="#fff" stroke-width="1.6" stroke-opacity=".8" paint-order="stroke" stroke-linejoin="round">ADDICKS /</text>
<text x="392" y="265.5" font-size="4.9" fill="#666" text-anchor="middle" letter-spacing=".75" stroke="#fff" stroke-width="1.6" stroke-opacity=".8" paint-order="stroke" stroke-linejoin="round">PARK TEN</text>
<text x="453.7" y="251.8" font-size="4.9" fill="#666" text-anchor="middle" letter-spacing=".75" stroke="#fff" stroke-width="1.6" stroke-opacity=".8" paint-order="stroke" stroke-linejoin="round">NORTHWEST</text>
<text x="453.7" y="256.8" font-size="4.9" fill="#666" text-anchor="middle" letter-spacing=".75" stroke="#fff" stroke-width="1.6" stroke-opacity=".8" paint-order="stroke" stroke-linejoin="round">HOUSTON</text>
<text x="347.8" y="423.3" font-size="4.9" fill="#666" text-anchor="middle" letter-spacing=".75" stroke="#fff" stroke-width="1.6" stroke-opacity=".8" paint-order="stroke" stroke-linejoin="round">ALIANA</text>
<text x="476.8" y="370.8" font-size="4.9" fill="#666" text-anchor="middle" letter-spacing=".75" stroke="#fff" stroke-width="1.6" stroke-opacity=".8" paint-order="stroke" stroke-linejoin="round">CHINATOWN</text>
<text x="533.3" y="208.1" font-size="4.9" fill="#666" text-anchor="middle" letter-spacing=".75" stroke="#fff" stroke-width="1.6" stroke-opacity=".8" paint-order="stroke" stroke-linejoin="round">GREATER</text>
<text x="533.3" y="213.1" font-size="4.9" fill="#666" text-anchor="middle" letter-spacing=".75" stroke="#fff" stroke-width="1.6" stroke-opacity=".8" paint-order="stroke" stroke-linejoin="round">INWOOD</text>
<text x="570.5" y="205.8" font-size="4.9" fill="#666" text-anchor="middle" letter-spacing=".75" stroke="#fff" stroke-width="1.6" stroke-opacity=".8" paint-order="stroke" stroke-linejoin="round">ACRES HOMES</text>
<text x="688.2" y="199.8" font-size="4.9" fill="#666" text-anchor="middle" letter-spacing=".75" stroke="#fff" stroke-width="1.6" stroke-opacity=".8" paint-order="stroke" stroke-linejoin="round">EAST LITTLE</text>
<text x="688.2" y="205.5" font-size="4.9" fill="#666" text-anchor="middle" letter-spacing=".75" stroke="#fff" stroke-width="1.6" stroke-opacity=".8" paint-order="stroke" stroke-linejoin="round">YORK /</text>
<text x="688.2" y="211" font-size="4.9" fill="#666" text-anchor="middle" letter-spacing=".75" stroke="#fff" stroke-width="1.6" stroke-opacity=".8" paint-order="stroke" stroke-linejoin="round">HOMESTEAD</text>
<text x="616.2" y="214.4" font-size="4.9" fill="#666" text-anchor="middle" letter-spacing=".75" stroke="#fff" stroke-width="1.6" stroke-opacity=".8" paint-order="stroke" stroke-linejoin="round">NORTHSIDE</text>
<text x="616.2" y="219.8" font-size="4.9" fill="#666" text-anchor="middle" letter-spacing=".75" stroke="#fff" stroke-width="1.6" stroke-opacity=".8" paint-order="stroke" stroke-linejoin="round">/ NORTHLINE</text>
<text x="651.8" y="228.6" font-size="4.9" fill="#666" text-anchor="middle" letter-spacing=".75" stroke="#fff" stroke-width="1.6" stroke-opacity=".8" paint-order="stroke" stroke-linejoin="round">EASTEX/ JENSEN</text>
<text x="592.6" y="235.7" font-size="4.9" fill="#666" text-anchor="middle" letter-spacing=".75" stroke="#fff" stroke-width="1.6" stroke-opacity=".8" paint-order="stroke" stroke-linejoin="round">NORTHSIDE</text>
<text x="687.3" y="239.8" font-size="4.9" fill="#666" text-anchor="middle" letter-spacing=".75" stroke="#fff" stroke-width="1.6" stroke-opacity=".8" paint-order="stroke" stroke-linejoin="round">TRINITY /</text>
<text x="687.3" y="245.1" font-size="4.9" fill="#666" text-anchor="middle" letter-spacing=".75" stroke="#fff" stroke-width="1.6" stroke-opacity=".8" paint-order="stroke" stroke-linejoin="round">HOUSTON</text>
<text x="687.3" y="250.5" font-size="4.9" fill="#666" text-anchor="middle" letter-spacing=".75" stroke="#fff" stroke-width="1.6" stroke-opacity=".8" paint-order="stroke" stroke-linejoin="round">GARDENS</text>
<text x="725" y="241.6" font-size="4.9" fill="#666" text-anchor="middle" letter-spacing=".75" stroke="#fff" stroke-width="1.6" stroke-opacity=".8" paint-order="stroke" stroke-linejoin="round">EAST HOUSTON</text>
<text x="666" y="297.5" font-size="4.9" fill="#666" text-anchor="middle" letter-spacing=".75" stroke="#fff" stroke-width="1.6" stroke-opacity=".8" paint-order="stroke" stroke-linejoin="round">GREATER</text>
<text x="666" y="302.8" font-size="4.9" fill="#666" text-anchor="middle" letter-spacing=".75" stroke="#fff" stroke-width="1.6" stroke-opacity=".8" paint-order="stroke" stroke-linejoin="round">FIFTH WARD</text>
<text x="685" y="336.8" font-size="4.9" fill="#666" text-anchor="middle" letter-spacing=".75" stroke="#fff" stroke-width="1.6" stroke-opacity=".8" paint-order="stroke" stroke-linejoin="round">GREATER</text>
<text x="685" y="342.3" font-size="4.9" fill="#666" text-anchor="middle" letter-spacing=".75" stroke="#fff" stroke-width="1.6" stroke-opacity=".8" paint-order="stroke" stroke-linejoin="round">EAST END</text>
<text x="553" y="418.8" font-size="4.9" fill="#666" text-anchor="middle" letter-spacing=".75" stroke="#fff" stroke-width="1.6" stroke-opacity=".8" paint-order="stroke" stroke-linejoin="round">SOUTHWEST</text>
<text x="553" y="424.1" font-size="4.9" fill="#666" text-anchor="middle" letter-spacing=".75" stroke="#fff" stroke-width="1.6" stroke-opacity=".8" paint-order="stroke" stroke-linejoin="round">HOUSTON</text>
<text x="575.6" y="444" font-size="4.9" fill="#666" text-anchor="middle" letter-spacing=".75" stroke="#fff" stroke-width="1.6" stroke-opacity=".8" paint-order="stroke" stroke-linejoin="round">CENTRAL</text>
<text x="575.6" y="449.4" font-size="4.9" fill="#666" text-anchor="middle" letter-spacing=".75" stroke="#fff" stroke-width="1.6" stroke-opacity=".8" paint-order="stroke" stroke-linejoin="round">SOUTHWEST</text>
<text x="661.3" y="414" font-size="4.9" fill="#666" text-anchor="middle" letter-spacing=".75" stroke="#fff" stroke-width="1.6" stroke-opacity=".8" paint-order="stroke" stroke-linejoin="round">SOUTHEAST</text>
<text x="661.3" y="419.3" font-size="4.9" fill="#666" text-anchor="middle" letter-spacing=".75" stroke="#fff" stroke-width="1.6" stroke-opacity=".8" paint-order="stroke" stroke-linejoin="round">HOUSTON</text>
<text x="640.7" y="441.8" font-size="4.9" fill="#666" text-anchor="middle" letter-spacing=".75" stroke="#fff" stroke-width="1.6" stroke-opacity=".8" paint-order="stroke" stroke-linejoin="round">SOUTH ACRES</text>
<text x="640.7" y="447.2" font-size="4.9" fill="#666" text-anchor="middle" letter-spacing=".75" stroke="#fff" stroke-width="1.6" stroke-opacity=".8" paint-order="stroke" stroke-linejoin="round">/ CRESTMONT</text>
<text x="640.7" y="452.5" font-size="4.9" fill="#666" text-anchor="middle" letter-spacing=".75" stroke="#fff" stroke-width="1.6" stroke-opacity=".8" paint-order="stroke" stroke-linejoin="round">PARK</text>
<text x="701" y="446.8" font-size="4.9" fill="#666" text-anchor="middle" letter-spacing=".75" stroke="#fff" stroke-width="1.6" stroke-opacity=".8" paint-order="stroke" stroke-linejoin="round">GREATER</text>
<text x="701" y="452.5" font-size="4.9" fill="#666" text-anchor="middle" letter-spacing=".75" stroke="#fff" stroke-width="1.6" stroke-opacity=".8" paint-order="stroke" stroke-linejoin="round">HOBBY AREA</text>
<text x="587.6" y="501.1" font-size="4.9" fill="#666" text-anchor="middle" letter-spacing=".75" stroke="#fff" stroke-width="1.6" stroke-opacity=".8" paint-order="stroke" stroke-linejoin="round">SHADOW</text>
<text x="587.6" y="506.5" font-size="4.9" fill="#666" text-anchor="middle" letter-spacing=".75" stroke="#fff" stroke-width="1.6" stroke-opacity=".8" paint-order="stroke" stroke-linejoin="round">CREEK RANCH</text>
<text x="577" y="285.8" font-size="4.9" fill="#666" text-anchor="middle" letter-spacing=".75" stroke="#fff" stroke-width="1.6" stroke-opacity=".8" paint-order="stroke" stroke-linejoin="round">WASHINGTON</text>
<text x="577" y="291" font-size="4.9" fill="#666" text-anchor="middle" letter-spacing=".75" stroke="#fff" stroke-width="1.6" stroke-opacity=".8" paint-order="stroke" stroke-linejoin="round">AVENUE</text>
<text x="577" y="296.2" font-size="4.9" fill="#666" text-anchor="middle" letter-spacing=".75" stroke="#fff" stroke-width="1.6" stroke-opacity=".8" paint-order="stroke" stroke-linejoin="round">COALITION /</text>
<text x="577" y="301.4" font-size="4.9" fill="#666" text-anchor="middle" letter-spacing=".75" stroke="#fff" stroke-width="1.6" stroke-opacity=".8" paint-order="stroke" stroke-linejoin="round">MEMORIAL PARK</text>
<text x="392" y="364.6" font-size="6" fill="#b0681e" text-anchor="middle" transform="rotate(-3.5 392 364.6)" stroke="#fff" stroke-width="1.6" stroke-opacity=".8" paint-order="stroke" stroke-linejoin="round">Westpark Tollway</text>
<text x="571" y="346.2" font-size="6" fill="#b0681e" text-anchor="middle" transform="rotate(-2.5 571 346.2)" stroke="#fff" stroke-width="1.6" stroke-opacity=".8" paint-order="stroke" stroke-linejoin="round">Southwest Fwy</text>
<text x="668.5" y="475.4" font-size="6" fill="#b0681e" text-anchor="middle" transform="rotate(-1 668.5 475.4)" stroke="#fff" stroke-width="1.6" stroke-opacity=".8" paint-order="stroke" stroke-linejoin="round">Sam Houston Tollway</text>
<text x="628.5" y="184" font-size="6" fill="#b0681e" text-anchor="middle" transform="rotate(79 628.5 184)" stroke="#fff" stroke-width="1.6" stroke-opacity=".8" paint-order="stroke" stroke-linejoin="round">Hardy Toll Rd</text>
<text x="518" y="478" font-size="6" fill="#b0681e" text-anchor="middle" transform="rotate(-74 518 478)" stroke="#fff" stroke-width="1.6" stroke-opacity=".8" paint-order="stroke" stroke-linejoin="round">Fort Bend Parkway Toll Rd</text>
<text x="231.5" y="490" font-size="6" font-weight="700" fill="#4a83dc" text-anchor="middle" transform="rotate(64 231.5 488)" stroke="#fff" stroke-width="1.6" stroke-opacity=".8" paint-order="stroke" stroke-linejoin="round">Brazos River</text>
<g transform="translate(610.5 345.5)"><path d="M0 0C0 0-5.4-5.6-5.4-9.8A5.4 5.4 0 0 1 5.4-9.8C5.4-5.6 0 0 0 0Z" fill="#1ea7b7"/><path d="M-2.8-8.2H2.8V-7.4H-2.8ZM-2.4-11.2L0-12.6L2.4-11.2V-10.6H-2.4ZM-2.2-10.2H-1.2V-8.6H-2.2ZM-.5-10.2H.5V-8.6H-.5ZM1.2-10.2H2.2V-8.6H1.2Z" fill="#fff"/></g>
<path d="M327.5 289.85C327.5 289.85 318.75 280.1 318.75 273.6A8.75 8.75 0 0 1 336.25 273.6C336.25 280.1 327.5 289.85 327.5 289.85Z" fill="#fe0000"/>
<circle cx="327.5" cy="273.6" r="6.6" fill="#fff"/>
<path d="M454.4 272.15C454.4 272.15 445.65 262.4 445.65 255.9A8.75 8.75 0 0 1 463.15 255.9C463.15 262.4 454.4 272.15 454.4 272.15Z" fill="#fe0000"/>
<circle cx="454.4" cy="255.9" r="6.6" fill="#fff"/>
<path d="M467.6 287.05C467.6 287.05 458.85 277.3 458.85 270.8A8.75 8.75 0 0 1 476.35 270.8C476.35 277.3 467.6 287.05 467.6 287.05Z" fill="#1279e2"/>
<circle cx="467.6" cy="270.8" r="6.6" fill="#fff"/>
<path d="M467.2 291.65C467.2 291.65 458.45 281.9 458.45 275.4A8.75 8.75 0 0 1 475.95 275.4C475.95 281.9 467.2 291.65 467.2 291.65Z" fill="#fe0000"/>
<circle cx="467.2" cy="275.4" r="6.6" fill="#fff"/>
<path d="M405.7 317.1C405.7 317.1 395.1 305.22 395.1 297.3A10.6 10.6 0 0 1 416.3 297.3C416.3 305.22 405.7 317.1 405.7 317.1Z" fill="#1279e2"/>
<circle cx="405.7" cy="297.3" r="7.9" fill="#fff"/>
<path d="M-3.9 5.4V-5.4H1l.3 1.3H4.6V2H.6L.3.7H-2.4V5.4Z" transform="translate(405.7 297.3)" fill="#1279e2"/>
<path d="M411 291.05C411 291.05 402.25 281.3 402.25 274.8A8.75 8.75 0 0 1 419.75 274.8C419.75 281.3 411 291.05 411 291.05Z" fill="#fe0000"/>
<circle cx="411" cy="274.8" r="6.6" fill="#fff"/>
<path d="M557.8 294.4C557.8 294.4 548 284.08 548 277.2A9.8 9.8 0 0 1 567.6 277.2C567.6 284.08 557.8 294.4 557.8 294.4Z" fill="#fe0000"/>
<circle cx="557.8" cy="277.2" r="7.6" fill="#fff"/>
<path d="M553.9 297.05C553.9 297.05 545.15 287.3 545.15 280.8A8.75 8.75 0 0 1 562.65 280.8C562.65 287.3 553.9 297.05 553.9 297.05Z" fill="#c931c4"/>
<circle cx="553.9" cy="280.8" r="6.6" fill="#fff"/>
<path d="M544 305.85C544 305.85 535.25 296.1 535.25 289.6A8.75 8.75 0 0 1 552.75 289.6C552.75 296.1 544 305.85 544 305.85Z" fill="#c931c4"/>
<circle cx="544" cy="289.6" r="6.6" fill="#fff"/>
<path d="M528.6 290.25C528.6 290.25 519.85 280.5 519.85 274A8.75 8.75 0 0 1 537.35 274C537.35 280.5 528.6 290.25 528.6 290.25Z" fill="#fe0000"/>
<circle cx="528.6" cy="274" r="6.6" fill="#fff"/>
<path d="M558.7 318.65C558.7 318.65 549.95 308.9 549.95 302.4A8.75 8.75 0 0 1 567.45 302.4C567.45 308.9 558.7 318.65 558.7 318.65Z" fill="#1279e2"/>
<circle cx="558.7" cy="302.4" r="6.6" fill="#fff"/>
<path d="M546.6 323.55C546.6 323.55 537.85 313.8 537.85 307.3A8.75 8.75 0 0 1 555.35 307.3C555.35 313.8 546.6 323.55 546.6 323.55Z" fill="#c931c4"/>
<circle cx="546.6" cy="307.3" r="6.6" fill="#fff"/>
<path d="M541.8 310.05C541.8 310.05 533.05 300.3 533.05 293.8A8.75 8.75 0 0 1 550.55 293.8C550.55 300.3 541.8 310.05 541.8 310.05Z" fill="#fe0000"/>
<circle cx="541.8" cy="293.8" r="6.6" fill="#fff"/>
<path d="M523.6 322.3C523.6 322.3 514.85 309.4 514.85 300.8A8.75 8.75 0 0 1 532.35 300.8C532.35 309.4 523.6 322.3 523.6 322.3Z" fill="#c931c4"/>
<circle cx="523.6" cy="300.8" r="6.6" fill="#fff"/>
<path d="M511.8 332C511.8 332 503.05 319.76 503.05 311.6A8.75 8.75 0 0 1 520.55 311.6C520.55 319.76 511.8 332 511.8 332Z" fill="#fe0000"/>
<circle cx="511.8" cy="311.6" r="6.6" fill="#fff"/>
<path d="M553.9 340.8C553.9 340.8 543.3 328.92 543.3 321A10.6 10.6 0 0 1 564.5 321C564.5 328.92 553.9 340.8 553.9 340.8Z" fill="#c931c4"/>
<circle cx="553.9" cy="321" r="7.9" fill="#fff"/>
<path d="M-3.9 5.4V-5.4H1l.3 1.3H4.6V2H.6L.3.7H-2.4V5.4Z" transform="translate(553.9 321)" fill="#c931c4"/>
<path d="M590 310.75C590 310.75 581.25 301 581.25 294.5A8.75 8.75 0 0 1 598.75 294.5C598.75 301 590 310.75 590 310.75Z" fill="#1279e2"/>
<circle cx="590" cy="294.5" r="6.6" fill="#fff"/>
<path d="M584.8 308.05C584.8 308.05 576.05 298.3 576.05 291.8A8.75 8.75 0 0 1 593.55 291.8C593.55 298.3 584.8 308.05 584.8 308.05Z" fill="#fe0000"/>
<circle cx="584.8" cy="291.8" r="6.6" fill="#fff"/>
<circle cx="611" cy="299.4" r="2.6" fill="#1279e2"/><circle cx="611" cy="299.4" r="1" fill="#fff"/>
<path d="M623.4 314.4C623.4 314.4 612.8 302.52 612.8 294.6A10.6 10.6 0 0 1 634 294.6C634 302.52 623.4 314.4 623.4 314.4Z" fill="#c931c4"/>
<circle cx="623.4" cy="294.6" r="7.9" fill="#fff"/>
<path d="M629.8 302.55C629.8 302.55 621.05 292.8 621.05 286.3A8.75 8.75 0 0 1 638.55 286.3C638.55 292.8 629.8 302.55 629.8 302.55Z" fill="#fe0000"/>
<circle cx="629.8" cy="286.3" r="0" fill="#fff"/>
<path d="M625 296.05C625 296.05 616.25 286.3 616.25 279.8A8.75 8.75 0 0 1 633.75 279.8C633.75 286.3 625 296.05 625 296.05Z" fill="#fe0000"/>
<circle cx="625" cy="279.8" r="0" fill="#fff"/>
<path d="M628 301C628 301 619.25 293.2 619.25 288A8.75 8.75 0 0 1 636.75 288C636.75 293.2 628 301 628 301Z" fill="#fe0000"/>
<circle cx="628" cy="288" r="0" fill="#fff"/>
<path d="M616.5 299C616.5 299 607.75 290.6 607.75 285A8.75 8.75 0 0 1 625.25 285C625.25 290.6 616.5 299 616.5 299Z" fill="#fe0000"/>
<circle cx="616.5" cy="285" r="0" fill="#fff"/>
<path d="M605.3 301.65C605.3 301.65 596.55 291.9 596.55 285.4A8.75 8.75 0 0 1 614.05 285.4C614.05 291.9 605.3 301.65 605.3 301.65Z" fill="#fe0000"/>
<circle cx="605.3" cy="285.4" r="6.6" fill="#fff"/>
<path d="M597.4 321C597.4 321 586.8 309.12 586.8 301.2A10.6 10.6 0 0 1 608 301.2C608 309.12 597.4 321 597.4 321Z" fill="#000"/>
<circle cx="597.4" cy="301.2" r="7.9" fill="#fff"/>
<path d="M-3.9 5.4V-5.4H1l.3 1.3H4.6V2H.6L.3.7H-2.4V5.4Z" transform="translate(597.4 301.2)" fill="#000"/>
<path d="M621.9 302.8C621.9 302.8 611.3 290.92 611.3 283A10.6 10.6 0 0 1 632.5 283C632.5 290.92 621.9 302.8 621.9 302.8Z" fill="#fe0000"/>
<circle cx="621.9" cy="283" r="7.9" fill="#fff"/>
<path d="M-3.9 5.4V-5.4H1l.3 1.3H4.6V2H.6L.3.7H-2.4V5.4Z" transform="translate(621.9 283)" fill="#fe0000"/>
<path d="M427 379.05C427 379.05 418.25 369.3 418.25 362.8A8.75 8.75 0 0 1 435.75 362.8C435.75 369.3 427 379.05 427 379.05Z" fill="#fe0000"/>
<circle cx="427" cy="362.8" r="6.6" fill="#fff"/>
<path d="M433.8 399.85C433.8 399.85 425.05 390.1 425.05 383.6A8.75 8.75 0 0 1 442.55 383.6C442.55 390.1 433.8 399.85 433.8 399.85Z" fill="#c931c4"/>
<circle cx="433.8" cy="383.6" r="6.6" fill="#fff"/>
<path d="M431.4 400.45C431.4 400.45 422.65 390.7 422.65 384.2A8.75 8.75 0 0 1 440.15 384.2C440.15 390.7 431.4 400.45 431.4 400.45Z" fill="#000"/>
<circle cx="431.4" cy="384.2" r="6.6" fill="#fff"/>
<g filter="drop-shadow(0 .5px 1px rgba(0,0,0,.3))"><rect x="212" y="164" width="100" height="24" rx="1.2" fill="#fff"/></g>
<rect x="253" y="164" width=".6" height="24" fill="#e6e6e6"/>
<text x="222" y="179.8" font-size="10.6" font-weight="700" fill="#111">Map</text>
<text x="263.6" y="179.8" font-size="10.6" fill="#666">Satellite</text>
<g filter="drop-shadow(0 .5px 1px rgba(0,0,0,.3))"><rect x="720.2" y="164.2" width="23.6" height="23.6" rx="1.2" fill="#fff"/><rect x="720.2" y="408.4" width="23.6" height="24" rx="1.2" fill="#fff"/><rect x="720.2" y="452" width="23.6" height="48" rx="1.2" fill="#fff"/></g>
<path d="M727.4 174.2V171.4H730.2M733.8 171.4H736.6V174.2M736.6 177.8V180.6H733.8M730.2 180.6H727.4V177.8" fill="none" stroke="#555" stroke-width="1.5"/>
<rect x="723.4" y="475.8" width="17.2" height=".6" fill="#e6e6e6"/>
<path d="M727.2 464H736.8M732 459.2V468.8M727.2 488.2H736.8" stroke="#666" stroke-width="1.9" fill="none"/>
<g transform="translate(732 420.5)"><circle cx="0" cy="-6" r="2.3" fill="#f5b921"/><path d="M-3.4-3.4Q0-4.4 3.4-3.4L3 1.6H2V7H.4V2.6H-.4V7H-2V1.6H-3Z" fill="#f2a900"/></g>
<rect x="505" y="507" width="245" height="7" fill="#fff" opacity=".72"/>
<g font-size="5.7" fill="#111"><text x="508" y="511.8" textLength="50.6" lengthAdjust="spacingAndGlyphs">Keyboard shortcuts</text><text x="567" y="511.8" textLength="81" lengthAdjust="spacingAndGlyphs">Map data ©2022 Google, INEGI</text><text x="655.3" y="511.8" textLength="34.7" lengthAdjust="spacingAndGlyphs">Terms of Use</text><text x="697" y="511.8" textLength="49" lengthAdjust="spacingAndGlyphs">Report a map error</text></g>
<text x="212.6" y="509" font-size="10.5" font-weight="400" letter-spacing="-.25" stroke="#fff" stroke-width="1.4" paint-order="stroke" stroke-opacity=".9"><tspan fill="#4285f4">G</tspan><tspan fill="#ea4335">o</tspan><tspan fill="#fbbc05">o</tspan><tspan fill="#4285f4">g</tspan><tspan fill="#34a853">l</tspan><tspan fill="#ea4335">e</tspan></text>
</svg></div>
  <div id="list">
    <div class="lrow" style="top:0"><b style="background:#f00"></b><span>Josh Evans</span><i></i></div>
    <div class="lrow" style="top:28.5px"><b style="background:#1b7ee2"></b><span>Adam Coiro</span><i></i></div>
    <div class="lrow" style="top:57px"><b style="background:#cc33c4"></b><span>Eva Lander</span><i></i></div>
    <div class="lrow" style="top:85.5px;border-bottom:0"><b style="background:#000"></b><span>Mike Myrick</span><i></i></div>
  </div>
  <div id="ftbar"><span>Field Tech</span></div>
<svg class="ic" style="left:11.8px;top:362.25px" width="13.5" height="13.5" viewBox="0 0 24 24" ><path d="M12 4.5C7 4.5 2.73 7.61 1 12c1.73 4.39 6 7.5 11 7.5s9.27-3.11 11-7.5c-1.73-4.39-6-7.5-11-7.5zM12 17c-2.76 0-5-2.24-5-5s2.24-5 5-5 5 2.24 5 5-2.24 5-5 5zm0-8c-1.66 0-3 1.34-3 3s1.34 3 3 3 3-1.34 3-3-1.34-3-3-3z" fill="#fff"/></svg>
<svg class="ic" style="left:0;top:382px" width="781" height="150" viewBox="206 540 781 150">
<g transform="translate(217.8 554.35) scale(.5625)"><path d="M12 4.5C7 4.5 2.73 7.61 1 12c1.73 4.39 6 7.5 11 7.5s9.27-3.11 11-7.5c-1.73-4.39-6-7.5-11-7.5zM12 17c-2.76 0-5-2.24-5-5s2.24-5 5-5 5 2.24 5 5-2.24 5-5 5zm0-8c-1.66 0-3 1.34-3 3s1.34 3 3 3 3-1.34 3-3-1.34-3-3-3z" fill="#757575"/></g>
<g transform="translate(334.3 553.9) scale(.6)"><path d="M16.24 7.76C15.07 6.59 13.54 6 12 6v6l-4.24 4.24c2.34 2.34 6.14 2.34 8.49 0 2.34-2.34 2.34-6.14-.01-8.48zM12 2C6.48 2 2 6.48 2 12s4.48 10 10 10 10-4.48 10-10S17.52 2 12 2zm0 18c-4.42 0-8-3.58-8-8s3.58-8 8-8 8 3.58 8 8-3.58 8-8 8z" fill="#757575"/></g>
<rect x="354.5" y="549.45" width="22.4" height="23.3" rx="5" fill="#fd1b1b"/>
<path d="M362.9 556.8V565.4L369.9 561.1Z" fill="#fff"/>
<rect x="379.1" y="550.05" width="20.4" height="22.1" rx="4.8" fill="#fff" stroke="#fd1b1b" stroke-width="1.25"/>
<rect x="376.05" y="555.6" width="2.75" height="11" fill="#fd1b1b"/>
<rect x="402.85" y="550.05" width="20.4" height="22.1" rx="4.8" fill="#fff" stroke="#fd1b1b" stroke-width="1.25"/>
<rect x="399.8" y="555.6" width="2.75" height="11" fill="#fd1b1b"/>
<rect x="426.6" y="550.05" width="20.4" height="22.1" rx="4.8" fill="#fff" stroke="#fd1b1b" stroke-width="1.25"/>
<rect x="423.55" y="555.6" width="2.75" height="11" fill="#fd1b1b"/>
<rect x="450.35" y="550.05" width="20.4" height="22.1" rx="4.8" fill="#fff" stroke="#fd1b1b" stroke-width="1.25"/>
<rect x="447.3" y="555.6" width="2.75" height="11" fill="#fd1b1b"/>
<rect x="474.1" y="550.05" width="20.4" height="22.1" rx="4.8" fill="#fff" stroke="#fd1b1b" stroke-width="1.25"/>
<rect x="471.05" y="555.6" width="2.75" height="11" fill="#fd1b1b"/>
<rect x="497.85" y="550.05" width="20.4" height="22.1" rx="4.8" fill="#fff" stroke="#fd1b1b" stroke-width="1.25"/>
<rect x="494.8" y="555.6" width="2.75" height="11" fill="#fd1b1b"/>
<rect x="521.6" y="550.05" width="20.4" height="22.1" rx="4.8" fill="#fff" stroke="#fd1b1b" stroke-width="1.25"/>
<rect x="518.55" y="555.6" width="2.75" height="11" fill="#fd1b1b"/>
<rect x="545.35" y="550.05" width="20.4" height="22.1" rx="4.8" fill="#fff" stroke="#fd1b1b" stroke-width="1.25"/>
<rect x="542.3" y="555.6" width="2.75" height="11" fill="#fd1b1b"/>
<rect x="569.1" y="550.05" width="20.4" height="22.1" rx="4.8" fill="#fff" stroke="#fd1b1b" stroke-width="1.25"/>
<rect x="566.05" y="555.6" width="2.75" height="11" fill="#fd1b1b"/>
<rect x="592.85" y="550.05" width="20.4" height="22.1" rx="4.8" fill="#fff" stroke="#fd1b1b" stroke-width="1.25"/>
<rect x="589.8" y="555.6" width="2.75" height="11" fill="#fd1b1b"/>
<rect x="616.6" y="550.05" width="20.4" height="22.1" rx="4.8" fill="#fff" stroke="#fd1b1b" stroke-width="1.25"/>
<rect x="613.55" y="555.6" width="2.75" height="11" fill="#fd1b1b"/>
<rect x="640.35" y="550.05" width="20.4" height="22.1" rx="4.8" fill="#fff" stroke="#fd1b1b" stroke-width="1.25"/>
<rect x="637.3" y="555.6" width="2.75" height="11" fill="#fd1b1b"/>
<rect x="664.1" y="550.05" width="20.4" height="22.1" rx="4.8" fill="#fff" stroke="#fd1b1b" stroke-width="1.25"/>
<rect x="661.05" y="555.6" width="2.75" height="11" fill="#fd1b1b"/>
<rect x="687.85" y="550.05" width="20.4" height="22.1" rx="4.8" fill="#fff" stroke="#fd1b1b" stroke-width="1.25"/>
<rect x="684.8" y="555.6" width="2.75" height="11" fill="#fd1b1b"/>
<rect x="711.6" y="550.05" width="20.4" height="22.1" rx="4.8" fill="#fff" stroke="#fd1b1b" stroke-width="1.25"/>
<rect x="708.55" y="555.6" width="2.75" height="11" fill="#fd1b1b"/>
<rect x="735.35" y="550.05" width="20.4" height="22.1" rx="4.8" fill="#fff" stroke="#fd1b1b" stroke-width="1.25"/>
<rect x="732.3" y="555.6" width="2.75" height="11" fill="#fd1b1b"/>
<rect x="759.1" y="550.05" width="20.4" height="22.1" rx="4.8" fill="#fff" stroke="#fd1b1b" stroke-width="1.25"/>
<rect x="756.05" y="555.6" width="2.75" height="11" fill="#fd1b1b"/>
<rect x="782.85" y="550.05" width="57" height="22.1" rx="4.8" fill="#fff" stroke="#fd1b1b" stroke-width="1.25"/>
<rect x="779.8" y="555.6" width="2.75" height="11" fill="#fd1b1b"/>
<rect x="843.2" y="550.05" width="20.4" height="22.1" rx="4.8" fill="#fff" stroke="#fd1b1b" stroke-width="1.25"/>
<rect x="840.15" y="555.6" width="2.75" height="11" fill="#fd1b1b"/>
<rect x="866.95" y="550.05" width="12.2" height="22.1" rx="4.8" fill="#fff" stroke="#fd1b1b" stroke-width="1.25"/>
<rect x="863.9" y="555.6" width="2.75" height="11" fill="#fd1b1b"/>
<rect x="882.5" y="550.05" width="20.4" height="22.1" rx="4.8" fill="#fff" stroke="#fd1b1b" stroke-width="1.25"/>
<rect x="879.45" y="555.6" width="2.75" height="11" fill="#fd1b1b"/>
<rect x="906.25" y="550.05" width="20.4" height="22.1" rx="4.8" fill="#fff" stroke="#fd1b1b" stroke-width="1.25"/>
<rect x="903.2" y="555.6" width="2.75" height="11" fill="#fd1b1b"/>
<rect x="930" y="550.05" width="20.4" height="22.1" rx="4.8" fill="#fff" stroke="#fd1b1b" stroke-width="1.25"/>
<rect x="926.95" y="555.6" width="2.75" height="11" fill="#fd1b1b"/>
<rect x="953.75" y="550.05" width="58.8" height="22.1" rx="4.8" fill="#fff" stroke="#fd1b1b" stroke-width="1.25"/>
<rect x="950.7" y="555.6" width="2.75" height="11" fill="#fd1b1b"/>
<g transform="translate(217.8 587.55) scale(.5625)"><path d="M12 4.5C7 4.5 2.73 7.61 1 12c1.73 4.39 6 7.5 11 7.5s9.27-3.11 11-7.5c-1.73-4.39-6-7.5-11-7.5zM12 17c-2.76 0-5-2.24-5-5s2.24-5 5-5 5 2.24 5 5-2.24 5-5 5zm0-8c-1.66 0-3 1.34-3 3s1.34 3 3 3 3-1.34 3-3-1.34-3-3-3z" fill="#757575"/></g>
<g transform="translate(334.3 587.1) scale(.6)"><path d="M16.24 7.76C15.07 6.59 13.54 6 12 6v6l-4.24 4.24c2.34 2.34 6.14 2.34 8.49 0 2.34-2.34 2.34-6.14-.01-8.48zM12 2C6.48 2 2 6.48 2 12s4.48 10 10 10 10-4.48 10-10S17.52 2 12 2zm0 18c-4.42 0-8-3.58-8-8s3.58-8 8-8 8 3.58 8 8-3.58 8-8 8z" fill="#757575"/></g>
<rect x="354.5" y="582.65" width="22.4" height="23.3" rx="5" fill="#1b7ee2"/>
<path d="M362.9 590V598.6L369.9 594.3Z" fill="#fff"/>
<rect x="379.1" y="583.25" width="20.4" height="22.1" rx="4.8" fill="#fff" stroke="#1b7ee2" stroke-width="1.25"/>
<rect x="376.05" y="588.8" width="2.75" height="11" fill="#1b7ee2"/>
<rect x="402.85" y="583.25" width="20.4" height="22.1" rx="4.8" fill="#fff" stroke="#1b7ee2" stroke-width="1.25"/>
<rect x="399.8" y="588.8" width="2.75" height="11" fill="#1b7ee2"/>
<rect x="426.6" y="583.25" width="58" height="22.1" rx="4.8" fill="#fff" stroke="#1b7ee2" stroke-width="1.25"/>
<rect x="423.55" y="588.8" width="2.75" height="11" fill="#1b7ee2"/>
<rect x="484.9" y="588.8" width="2.75" height="11" fill="#1b7ee2"/>
<rect x="487.35" y="582.65" width="22" height="23.3" rx="5" fill="#1b7ee2"/>
<g transform="translate(492.35 588.1) scale(.5)"><path d="M14.4 6L14 4H5v17h2v-7h5.6l.4 2h7V6z" fill="#fff"/></g>
<g transform="translate(217.8 620.75) scale(.5625)"><path d="M12 4.5C7 4.5 2.73 7.61 1 12c1.73 4.39 6 7.5 11 7.5s9.27-3.11 11-7.5c-1.73-4.39-6-7.5-11-7.5zM12 17c-2.76 0-5-2.24-5-5s2.24-5 5-5 5 2.24 5 5-2.24 5-5 5zm0-8c-1.66 0-3 1.34-3 3s1.34 3 3 3 3-1.34 3-3-1.34-3-3-3z" fill="#757575"/></g>
<g transform="translate(334.3 620.3) scale(.6)"><path d="M16.24 7.76C15.07 6.59 13.54 6 12 6v6l-4.24 4.24c2.34 2.34 6.14 2.34 8.49 0 2.34-2.34 2.34-6.14-.01-8.48zM12 2C6.48 2 2 6.48 2 12s4.48 10 10 10 10-4.48 10-10S17.52 2 12 2zm0 18c-4.42 0-8-3.58-8-8s3.58-8 8-8 8 3.58 8 8-3.58 8-8 8z" fill="#757575"/></g>
<rect x="354.5" y="615.85" width="22.4" height="23.3" rx="5" fill="#cc33c4"/>
<path d="M362.9 623.2V631.8L369.9 627.5Z" fill="#fff"/>
<rect x="379.1" y="616.45" width="20.4" height="22.1" rx="4.8" fill="#fff" stroke="#cc33c4" stroke-width="1.25"/>
<rect x="376.05" y="622" width="2.75" height="11" fill="#cc33c4"/>
<rect x="402.85" y="616.45" width="20.4" height="22.1" rx="4.8" fill="#fff" stroke="#cc33c4" stroke-width="1.25"/>
<rect x="399.8" y="622" width="2.75" height="11" fill="#cc33c4"/>
<rect x="426.6" y="616.45" width="20.4" height="22.1" rx="4.8" fill="#fff" stroke="#cc33c4" stroke-width="1.25"/>
<rect x="423.55" y="622" width="2.75" height="11" fill="#cc33c4"/>
<rect x="450.35" y="616.45" width="20.4" height="22.1" rx="4.8" fill="#fff" stroke="#cc33c4" stroke-width="1.25"/>
<rect x="447.3" y="622" width="2.75" height="11" fill="#cc33c4"/>
<rect x="474.1" y="616.45" width="20.4" height="22.1" rx="4.8" fill="#fff" stroke="#cc33c4" stroke-width="1.25"/>
<rect x="471.05" y="622" width="2.75" height="11" fill="#cc33c4"/>
<rect x="497.85" y="616.45" width="20.4" height="22.1" rx="4.8" fill="#fff" stroke="#cc33c4" stroke-width="1.25"/>
<rect x="494.8" y="622" width="2.75" height="11" fill="#cc33c4"/>
<rect x="521.6" y="616.45" width="56.4" height="22.1" rx="4.8" fill="#fff" stroke="#cc33c4" stroke-width="1.25"/>
<rect x="518.55" y="622" width="2.75" height="11" fill="#cc33c4"/>
<rect x="581.35" y="616.45" width="20.4" height="22.1" rx="4.8" fill="#fff" stroke="#cc33c4" stroke-width="1.25"/>
<rect x="578.3" y="622" width="2.75" height="11" fill="#cc33c4"/>
<rect x="602.05" y="622" width="2.75" height="11" fill="#cc33c4"/>
<rect x="604.5" y="615.85" width="22" height="23.3" rx="5" fill="#cc33c4"/>
<g transform="translate(609.5 621.3) scale(.5)"><path d="M14.4 6L14 4H5v17h2v-7h5.6l.4 2h7V6z" fill="#fff"/></g>
<g transform="translate(217.8 653.95) scale(.5625)"><path d="M12 4.5C7 4.5 2.73 7.61 1 12c1.73 4.39 6 7.5 11 7.5s9.27-3.11 11-7.5c-1.73-4.39-6-7.5-11-7.5zM12 17c-2.76 0-5-2.24-5-5s2.24-5 5-5 5 2.24 5 5-2.24 5-5 5zm0-8c-1.66 0-3 1.34-3 3s1.34 3 3 3 3-1.34 3-3-1.34-3-3-3z" fill="#757575"/></g>
<g transform="translate(334.3 653.5) scale(.6)"><path d="M16.24 7.76C15.07 6.59 13.54 6 12 6v6l-4.24 4.24c2.34 2.34 6.14 2.34 8.49 0 2.34-2.34 2.34-6.14-.01-8.48zM12 2C6.48 2 2 6.48 2 12s4.48 10 10 10 10-4.48 10-10S17.52 2 12 2zm0 18c-4.42 0-8-3.58-8-8s3.58-8 8-8 8 3.58 8 8-3.58 8-8 8z" fill="#757575"/></g>
<rect x="354.5" y="649.05" width="22.4" height="23.3" rx="5" fill="#000000"/>
<path d="M362.9 656.4V665L369.9 660.7Z" fill="#fff"/>
<rect x="379.1" y="649.65" width="57.2" height="22.1" rx="4.8" fill="#fff" stroke="#000000" stroke-width="1.25"/>
<rect x="376.05" y="655.2" width="2.75" height="11" fill="#000000"/>
<rect x="439.65" y="649.65" width="20.4" height="22.1" rx="4.8" fill="#fff" stroke="#000000" stroke-width="1.25"/>
<rect x="436.6" y="655.2" width="2.75" height="11" fill="#000000"/>
<rect x="460.35" y="655.2" width="2.75" height="11" fill="#000000"/>
<rect x="462.8" y="649.05" width="22" height="23.3" rx="5" fill="#000000"/>
<g transform="translate(467.8 654.5) scale(.5)"><path d="M14.4 6L14 4H5v17h2v-7h5.6l.4 2h7V6z" fill="#fff"/></g>
</svg>
  <div class="trow" style="top:386.6px"><b style="background:#f00"></b><span>Josh Evans</span></div>
  <div class="trow" style="top:419.8px"><b style="background:#1b7ee2"></b><span>Adam Coiro</span></div>
  <div class="trow" style="top:453px"><b style="background:#cc33c4"></b><span>Eva Lander</span></div>
  <div class="trow" style="top:486.2px"><b style="background:#000"></b><span>Mike Myrick</span></div>
  <div id="hs"><div id="hst"></div></div>
</div>
<div id="foot"><svg class="ic" style="left:252.6px;top:9.6px" width="13" height="9" viewBox="0 0 13 9"><path d="M2.6.4H5L2.6 8.4H.2Z" fill="#22d3ee"/><path d="M6.6.4H9L7.4 8.4H5Z" fill="#38c3dc"/><path d="M10.4.4H12.7L12.2 8.4H9.8Z" fill="#4fb3ca"/></svg><span>Copyright © 2022 All rights reserved. Sweep&amp;Go is a registered trademark of OGO Sense LLC.</span></div>
<div id="vscroll"></div><div class="vthumb" style="top:1px;height:464px"></div><div class="vthumb" style="top:593px;height:153px"></div>
</body>
</html>
